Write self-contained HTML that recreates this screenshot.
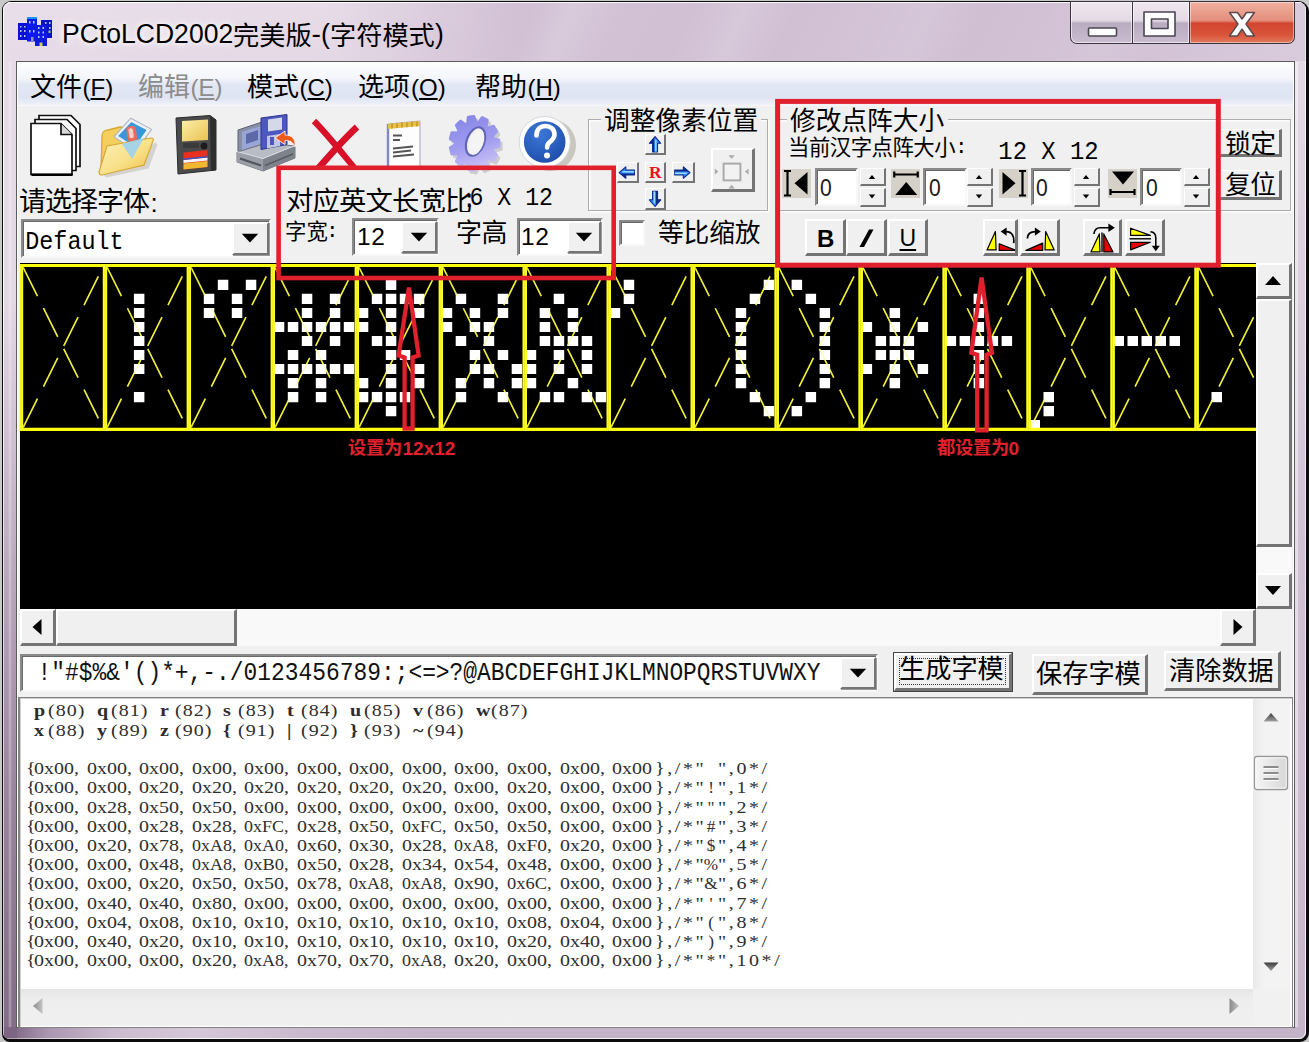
<!DOCTYPE html>
<html lang="zh"><head><meta charset="utf-8"><title>PCtoLCD2002</title>
<style>
*{margin:0;padding:0;box-sizing:border-box}
html,body{width:1309px;height:1042px;overflow:hidden}
body{background:#c9c9c9;font-family:"Liberation Sans",sans-serif;position:relative}
div,span.tx,svg.t,svg.i{position:absolute}
svg.t{overflow:visible}
svg.t text{font-family:"Liberation Sans","Noto Sans CJK SC",sans-serif}
span.tx{white-space:pre;line-height:1;color:#000}
.mono{font-family:"Liberation Mono",monospace}
.serif{font-family:"Liberation Serif",serif}
.serifmono{font-family:"Liberation Mono",monospace}
.btn{background:#f0f0f0;border:2px solid;border-color:#fff #747474 #747474 #fff;box-shadow:1px 1px 0 #9a9a9a}
.sunk{background:#fff;border:2px solid;border-color:#8a8a8a #f8f8f8 #f8f8f8 #8a8a8a;box-shadow:inset 1px 1px 0 #6a6a6a}
</style></head>
<body>
<div style="left:2px;top:1px;width:1307px;height:1041px;border-radius:9px 11px 9px 8px;background:#0c0c0c;"></div>
<div style="left:3px;top:2px;width:1303px;height:1037px;border-radius:8px 8px 7px 7px;overflow:hidden;background:linear-gradient(180deg,#e9dfea 0,#e6dbe7 60px,#e2d6e4 400px,#d9cadb 700px,#cdbcd1 900px,#c4b2c9 1037px);box-shadow:inset 0 0 0 1px rgba(255,255,255,.75);"><div style="left:0px;top:0px;width:1303px;height:59px;background:linear-gradient(115deg,rgba(255,255,255,0) 0,rgba(255,255,255,0) 40%,rgba(255,255,255,.16) 43%,rgba(255,255,255,.02) 47%,rgba(255,255,255,0) 52%,rgba(255,255,255,.14) 56%,rgba(255,255,255,0) 60%,rgba(255,255,255,.12) 70%,rgba(255,255,255,0) 74%,rgba(255,255,255,.1) 84%,rgba(255,255,255,0) 88%),linear-gradient(90deg,rgba(208,190,211,0) 0,rgba(208,190,211,.1) 330px,rgba(208,190,211,.95) 520px,rgba(208,190,211,1) 1050px,rgba(214,198,217,.8) 1303px);"></div><div style="left:0px;top:298px;width:13.5px;height:739px;background:linear-gradient(180deg,rgba(150,125,155,0) 0,rgba(150,125,155,.35) 200px,rgba(135,110,140,.75) 500px,rgba(125,100,130,.9) 739px);"></div><div style="left:5px;top:60px;width:4px;height:965px;background:linear-gradient(90deg,rgba(255,255,255,0),rgba(255,255,255,.35),rgba(255,255,255,0));"></div><div style="left:0px;top:1025px;width:1303px;height:12px;background:linear-gradient(90deg,rgba(125,100,130,.9) 0,rgba(125,100,130,.9) 12px,rgba(140,116,146,.45) 45px,rgba(255,255,255,.1) 110px,rgba(255,255,255,.28) 190px,rgba(255,255,255,.1) 300px,rgba(255,255,255,0) 430px);"></div><div style="left:1291px;top:60px;width:12px;height:977px;background:linear-gradient(180deg,rgba(200,180,205,.05) 0,rgba(195,172,200,.25) 250px,rgba(190,168,196,.4) 500px,rgba(200,180,205,.15) 977px);"></div><div style="left:1292px;top:60px;width:2.5px;height:965px;background:rgba(255,255,255,.45);"></div><div style="left:0px;top:0px;width:1303px;height:1.2px;background:rgba(255,255,255,.85);"></div><div style="left:0px;top:0px;width:1.2px;height:1037px;background:rgba(255,255,255,.6);"></div><div style="left:1301.8px;top:0px;width:1.2px;height:1037px;background:rgba(255,255,255,.5);"></div><div style="left:0px;top:1035.8px;width:1303px;height:1.2px;background:rgba(255,255,255,.45);"></div></div>
<div style="left:16px;top:61px;width:1279px;height:967px;background:#5c5c5c;"></div>
<div style="left:17px;top:62px;width:1277px;height:965px;background:#fdfdfd;"></div>
<div style="left:18px;top:63px;width:1275px;height:963px;background:#f0f0f0;"></div>
<svg class="i" style="left:17px;top:16px" width="37" height="33" viewBox="0 0 37 33">
<rect x="1" y="7" width="11" height="17" fill="#0a12d8"/><rect x="10" y="1.5" width="10" height="24" fill="#0a1aee"/>
<rect x="10" y="1" width="10" height="2" fill="#1e90ff"/>
<rect x="24" y="4" width="11" height="18" fill="#0a12c8"/><rect x="18" y="9" width="12" height="21" fill="#0d18e0"/>
<g fill="#b8c4ff"><rect x="3" y="10" width="1.5" height="1.5"/><rect x="7" y="10" width="1.5" height="1.5"/><rect x="3" y="14" width="1.5" height="2"/><rect x="7" y="14" width="1.5" height="2"/><rect x="3" y="19" width="1.5" height="2"/><rect x="7" y="19" width="1.5" height="2"/>
<rect x="12" y="5" width="1.5" height="2.5"/><rect x="16" y="5" width="1.5" height="2.5"/><rect x="12" y="14" width="1.5" height="2.5"/><rect x="16" y="14" width="1.5" height="2.5"/>
<rect x="21" y="11" width="1.5" height="2"/><rect x="25.5" y="11" width="1.5" height="2"/><rect x="21" y="15.5" width="1.5" height="2"/><rect x="25.5" y="15.5" width="1.5" height="2"/><rect x="21" y="20" width="1.5" height="2"/><rect x="25.5" y="20" width="1.5" height="2"/>
<rect x="28" y="6" width="1.5" height="2"/><rect x="32" y="6" width="1.5" height="2"/><rect x="32" y="11" width="1.5" height="2"/></g>
<rect x="31.5" y="14.500" width="2" height="2.500" fill="#9c6"/><rect x="14" y="21" width="2.500" height="4" fill="#99a"/><rect x="22.500" y="26.500" width="3" height="3.500" fill="#cc5"/>
</svg>
<span class="tx" style="left:61.5px;top:18.8px;font-size:28.4px;color:#000;transform:scaleX(.935);transform-origin:0 0;text-shadow:0 0 6px #fff,0 0 10px #fff;">PCtoLCD2002</span>
<svg class="t" role="img" aria-label="完美版" style="left:232.8px;top:21.5px;" width="80.6" height="31.4" viewBox="0 0 80.6 31.4" fill="#000"><text x="0" y="23.06" font-size="26.2">完美版</text></svg>
<span class="tx" style="left:311.5px;top:18.8px;font-size:28.4px;">-</span>
<span class="tx" style="left:321.3px;top:18.8px;font-size:28.4px;transform:scaleX(.935);transform-origin:0 0;">(</span>
<svg class="t" role="img" aria-label="字符模式" style="left:330px;top:21.5px;" width="106.8" height="31.4" viewBox="0 0 106.8 31.4" fill="#000"><text x="0" y="23.06" font-size="26.2">字符模式</text></svg>
<span class="tx" style="left:435px;top:18.8px;font-size:28.4px;transform:scaleX(.935);transform-origin:0 0;">)</span>
<div style="left:1070px;top:1px;width:225px;height:43px;border-radius:0 0 7px 7px;background:#3a3440;"></div>
<div style="left:1071px;top:2px;width:61px;height:41px;border-radius:0 0 0 6px;background:linear-gradient(180deg,#efe7ef 0,#e4dae6 45%,#b9abc0 52%,#cbbdd0 100%);box-shadow:inset 0 0 0 1px rgba(255,255,255,.6);"></div>
<div style="left:1133px;top:2px;width:56px;height:41px;background:linear-gradient(180deg,#efe7ef 0,#e4dae6 45%,#b9abc0 52%,#cbbdd0 100%);box-shadow:inset 0 0 0 1px rgba(255,255,255,.6);"></div>
<div style="left:1190px;top:2px;width:104px;height:41px;border-radius:0 0 6px 0;background:linear-gradient(180deg,#f0b1a0 0,#e58e7c 45%,#d2452e 52%,#d9543a 80%,#e07a5c 100%);box-shadow:inset 0 0 0 1px rgba(255,255,255,.45);"></div>
<svg class="i" style="left:1070px;top:0" width="226" height="46" viewBox="0 0 226 46">
<rect x="18.5" y="28" width="28" height="8" rx="1" fill="#fdfdfd" stroke="#4a4652" stroke-width="1.6"/>
<path d="M74 12h31v24h-31z M81.5 19v9.5h16.5v-9.5z" fill="#fdfdfd" fill-rule="evenodd" stroke="#4a4652" stroke-width="1.6" stroke-linejoin="round"/>
<path d="M159.5 12.5h8l4.5 6.5 4.500 -6.500h8l-8.500 11.500 8.500 12h-8l-4.500 -6.800 -4.500 6.800h-8l8.500 -12z" fill="#fdfdfd" stroke="#5a4a50" stroke-width="1.5" stroke-linejoin="round"/>
</svg>
<div style="left:18px;top:63px;width:1275px;height:43px;background:linear-gradient(180deg,#fdfdfe 0,#f4f6fb 35%,#e2e7f5 50%,#dfe4f3 80%,#e9edf7 92%,#f3f4f8 100%);"></div>
<div style="left:18px;top:105px;width:1275px;height:1px;background:#f7f7f7;"></div>
<svg class="t" role="img" aria-label="文件" style="left:29.5px;top:73.3px;" width="54.0" height="31.2" viewBox="0 0 54.0 31.2" fill="#000"><text x="0" y="22.88" font-size="26">文件</text></svg>
<span class="tx" style="left:82.5px;top:75.8px;font-size:24px;color:#000;">(<u>F</u>)</span>
<svg class="t" role="img" aria-label="编辑" style="left:137.5px;top:73.3px;" width="54.0" height="31.2" viewBox="0 0 54.0 31.2" fill="#8c8c8c"><text x="0" y="22.88" font-size="26">编辑</text></svg>
<span class="tx" style="left:190.5px;top:75.8px;font-size:24px;color:#8c8c8c;">(<u>E</u>)</span>
<svg class="t" role="img" aria-label="模式" style="left:246.5px;top:73.3px;" width="54.0" height="31.2" viewBox="0 0 54.0 31.2" fill="#000"><text x="0" y="22.88" font-size="26">模式</text></svg>
<span class="tx" style="left:299.5px;top:75.8px;font-size:24px;color:#000;">(<u>C</u>)</span>
<svg class="t" role="img" aria-label="选项" style="left:358.0px;top:73.3px;" width="54.0" height="31.2" viewBox="0 0 54.0 31.2" fill="#000"><text x="0" y="22.88" font-size="26">选项</text></svg>
<span class="tx" style="left:411.0px;top:75.8px;font-size:24px;color:#000;">(<u>O</u>)</span>
<svg class="t" role="img" aria-label="帮助" style="left:474.5px;top:73.3px;" width="54.0" height="31.2" viewBox="0 0 54.0 31.2" fill="#000"><text x="0" y="22.88" font-size="26">帮助</text></svg>
<span class="tx" style="left:527.5px;top:75.8px;font-size:24px;color:#000;">(<u>H</u>)</span>
<svg class="i" style="left:28px;top:112px" width="56" height="66" viewBox="0 0 56 66">
<g stroke="#111" stroke-width="1.700" stroke-linejoin="miter" fill="#fff">
<path d="M11 3.500h32l9 9v42h-41z"/><path d="M7 7.500h32l9 9v42h-41z"/>
<path d="M3 11.500h30l11 11v40h-41z"/><path d="M33 11.500v11h11" fill="#d8d8d8"/></g>
<path d="M3.500 62.800h41" stroke="#000" stroke-width="2.6"/>
</svg>
<svg class="i" style="left:96px;top:114px" width="62" height="64" viewBox="0 0 62 64">
<defs><linearGradient id="fg" x1="0" y1="0" x2="1" y2="1"><stop offset="0" stop-color="#fdf2ba"/><stop offset=".55" stop-color="#f8e088"/><stop offset="1" stop-color="#eebc40"/></linearGradient></defs>
<path d="M5 60l3 2 42-9 9-24-2-2z" fill="#b4b0a4" opacity=".45" transform="translate(2.500 1.500)"/>
<path d="M6 22c0-4 3-6 6-6l12-3 22 3c3 0 4 2 4 5l-2 30-40 8c-2 0-3-1-3-3z" fill="#f4cf5e" stroke="#d8a82e" stroke-width="1.3"/>
<g transform="rotate(-8 37 20)"><path d="M18 20l19-16 19 14-19 20z" fill="#eef2f8" stroke="#b0b4c0" stroke-width="1.1"/>
<path d="M22 20l15-12 14 10-14 15z" fill="#3c96dc"/>
<rect x="31" y="12" width="9.500" height="15" rx="3.500" fill="#ee6a58"/><rect x="33" y="14" width="4.500" height="10" rx="2" fill="#fbd0c8"/></g>
<path d="M3 58l8-26 44-8c2 0 3 1 2 3l-9 24-42 10c-2 0-3-1-3-3z" fill="url(#fg)" stroke="#d6aa3a" stroke-width="1.2"/>
<path d="M26 30l22-6-12 21z" fill="#9cd0f0" opacity=".9"/>
</svg>
<svg class="i" style="left:173px;top:113px" width="46" height="64" viewBox="0 0 46 64">
<defs><linearGradient id="yl" x1="0" y1="0" x2="1" y2="1"><stop offset="0" stop-color="#fdf0a8"/><stop offset="1" stop-color="#eac050"/></linearGradient></defs>
<path d="M3 5l34-2.500 6 4.500v50l-38 4z" fill="#4a4a4a" stroke="#2a2a2a" stroke-width="1"/>
<path d="M37 2.500l6 4.500v50l-5 .6z" fill="#2e2e2e"/>
<path d="M9 8l26-1.600v20.500l-26 1.600z" fill="url(#yl)"/>
<circle cx="31" cy="33" r="3.400" fill="#1c1c1c"/><rect x="10" y="30" width="16" height="5" fill="#3a3a3a"/>
<path d="M10.500 39.500l24-2.500v17l-24 2.500z" fill="#e83020"/>
<path d="M10.500 47l24-2.500v3l-24 2.500z" fill="#f4f4ff"/><path d="M10.500 45.500l24-2.500v1.600l-24 2.500z" fill="#4050c0"/>
<path d="M10.500 50.500l24-2.500v6l-24 2.500z" fill="#f0b830"/>
</svg>
<svg class="i" style="left:235px;top:112px" width="64" height="64" viewBox="0 0 64 64">
<path d="M3 18l24-8 8 3v26l-28 8-4-4z" fill="#8890a8" stroke="#5a5f74" stroke-width="1"/>
<path d="M7 20l19-6v18l-19 6z" fill="#9aa6d8"/><path d="M11 22l12-4v10l-12 4z" fill="#5c68a8"/>
<path d="M2 40l30-9 28 3v12l-32 13-26-9z" fill="#b8bcc4" stroke="#70747c" stroke-width="1"/>
<path d="M2 40l26 7 32-13" fill="none" stroke="#e8eaee" stroke-width="1.500"/>
<path d="M28 47v12l32-13v-12z" fill="#7e828a"/><path d="M2 40v10l26 9v-12z" fill="#9a9ea6"/><path d="M5 46.500l21 7" stroke="#50545c" stroke-width="2.200"/><path d="M30 53.500l28-11.500" stroke="#585c64" stroke-width="1.600"/>
<path d="M26 6l26-3.500v30l-26 5z" fill="#4c58c0" stroke="#2c3488" stroke-width="1"/>
<path d="M33 7.500l14-2v12l-14 2z" fill="#d4d8e8"/><path d="M32 24l13-2v12l-13 2.500z" fill="#c0c6e0"/><rect x="35" y="25" width="4" height="8" fill="#4c58c0"/>
<path d="M40 26l10-7v4c7 0 11 4 10 12-2-5-5-6.500-10-6.500v4z" fill="#f05a1c" stroke="#fff" stroke-width=".8"/>
</svg>
<svg class="i" style="left:310px;top:118px" width="54" height="50" viewBox="0 0 54 50">
<g stroke="#d81028" stroke-linecap="butt" fill="none"><path d="M4 3C17 16 32 35 47 53" stroke-width="6.200"/><path d="M47 9C33 22 19 38 6 53" stroke-width="6.600"/></g>
</svg>
<svg class="i" style="left:384px;top:115px" width="42" height="53" viewBox="0 0 42 53">
<path d="M4 9l32-3v50l-32 3z" fill="#fdfdfd" stroke="#aab" stroke-width="1"/>
<path d="M4 9v50" stroke="#8088c8" stroke-width="2.400"/><path d="M36 6v50" stroke="#ccd" stroke-width="2"/>
<path d="M4 9l32-3v5l-32 3z" fill="#e6c24c"/>
<g stroke="#c89a20" stroke-width="1.600"><path d="M8 8.500v5M13 8v5M18 7.600v5M23 7.200v5M28 6.800v5M33 6.400v5"/></g>
<g stroke="#555" stroke-width="1.800"><path d="M9 20.500h9M9 25h7M9 33.500l20-2M9 37.500l18-2M9 41.500l21-2M9 53h8M9 57h7"/></g>
</svg>
<svg class="i" style="left:444px;top:110px" width="62" height="70" viewBox="0 0 62 70">
<defs><linearGradient id="gg" x1="0" y1="0" x2=".3" y2="1"><stop offset="0" stop-color="#8484e4"/><stop offset=".6" stop-color="#a09cf0"/><stop offset="1" stop-color="#c4bcf4"/></linearGradient></defs>
<g transform="translate(2.500 3)"><path transform="translate(30.500 33.300) scale(.875 .955) translate(-30 -33)" d="M51.5 28.3L57.8 29.8L57.8 36.2L51.5 37.7L50.6 40.7L55.1 45.4L51.7 50.7L45.6 48.6L43.2 50.6L44.5 57.0L38.7 59.6L34.7 54.5L31.6 54.9L29.2 61.0L22.9 60.1L22.3 53.6L19.5 52.3L14.2 56.1L9.4 51.9L12.4 46.2L10.7 43.5L4.2 43.9L2.4 37.8L8.1 34.6L8.1 31.4L2.4 28.2L4.2 22.1L10.7 22.5L12.4 19.8L9.4 14.1L14.2 9.9L19.5 13.7L22.3 12.4L22.9 5.9L29.2 5.0L31.6 11.1L34.7 11.5L38.7 6.4L44.5 9.0L43.2 15.4L45.6 17.4L51.7 15.3L55.1 20.6L50.6 25.3Z" fill="#a8a8b4" opacity=".5" stroke="#a8a8b4" stroke-width="3" stroke-linejoin="round"/></g>
<path transform="translate(30.500 33.300) scale(.875 .955) translate(-30 -33)" d="M51.5 28.3L57.8 29.8L57.8 36.2L51.5 37.7L50.6 40.7L55.1 45.4L51.7 50.7L45.6 48.6L43.2 50.6L44.5 57.0L38.7 59.6L34.7 54.5L31.6 54.9L29.2 61.0L22.9 60.1L22.3 53.6L19.5 52.3L14.2 56.1L9.4 51.9L12.4 46.2L10.7 43.5L4.2 43.9L2.4 37.8L8.1 34.6L8.1 31.4L2.4 28.2L4.2 22.1L10.7 22.5L12.4 19.8L9.4 14.1L14.2 9.9L19.5 13.7L22.3 12.4L22.9 5.9L29.2 5.0L31.6 11.1L34.7 11.5L38.7 6.4L44.5 9.0L43.2 15.4L45.6 17.4L51.7 15.3L55.1 20.6L50.6 25.3Z" fill="url(#gg)" stroke="url(#gg)" stroke-width="3.500" stroke-linejoin="round"/>
<ellipse cx="31.500" cy="31.500" rx="8.800" ry="14.800" transform="rotate(20 31.500 31.500)" fill="#f0f0f0" stroke="#6464b8" stroke-width="2.200"/>
<ellipse cx="32.600" cy="32.500" rx="6.800" ry="12.800" transform="rotate(20 32.600 32.500)" fill="#f4f4f4"/>
</svg>
<svg class="i" style="left:514px;top:112px" width="68" height="64" viewBox="0 0 68 64">
<defs><radialGradient id="hb" cx=".4" cy=".3" r=".8"><stop offset="0" stop-color="#3c78d8"/><stop offset="1" stop-color="#1c4aa8"/></radialGradient></defs>
<ellipse cx="36" cy="33" rx="26" ry="26" fill="#b8b4a8" opacity=".7"/>
<circle cx="30.700" cy="30" r="25.500" fill="#fdfdfd" stroke="#d4d8e0" stroke-width="1"/>
<circle cx="30.700" cy="30" r="20.800" fill="url(#hb)"/>
<path d="M22.500 23.500c0-6 4-9.500 9-9.500s9 3.300 9 8.300c0 4.200-2.500 6-5 8-1.800 1.500-2.400 2.600-2.400 5.200" fill="none" stroke="#fff" stroke-width="4.600" stroke-linecap="round"/>
<circle cx="33" cy="43.500" r="3" fill="#fff"/>
</svg>
<svg class="t" role="img" aria-label="请选择字体" style="left:19.3px;top:187px;" width="132.0" height="32.400" viewBox="0 0 132.0 32.400" fill="#000"><text x="0" y="23.76" font-size="27" letter-spacing="-1">请选择字体</text></svg>
<span class="tx" style="left:150.5px;top:189.5px;font-size:26px;font-family:"Liberation Mono",monospace;font-weight:bold;">:</span>
<div class="sunk" style="left:20.5px;top:219px;width:250px;height:39px;"></div>
<div class="btn" style="left:232px;top:222px;width:36.500px;height:33px;"></div>
<svg class="i" style="left:241.2px;top:233.0px" width="18" height="10" viewBox="0 0 18 10"><path d="M.8 .8h16.400l-8.200 8.600z" fill="#000"/></svg>
<span class="tx mono" style="left:25.3px;top:229.8px;font-size:23.4px;transform:scaleY(1.12);transform-origin:0 0;">Default</span>
<div style="left:284px;top:184px;width:275px;height:28px;overflow:hidden;"><svg class="t" role="img" aria-label="对应英文长宽比" style="left:2px;top:2.5px;" width="187.5" height="32.900" viewBox="0 0 187.5 32.900" fill="#000"><text x="0" y="24.11" font-size="27.4" letter-spacing="-0.9">对应英文长宽比</text></svg><span class="tx mono" style="left:178px;top:4.5px;font-size:24px;">:</span><span class="tx mono" style="left:185.5px;top:1.8px;font-size:23.2px;transform:scaleY(1.14);transform-origin:0 0;">6 X 12</span></div>
<svg class="t" role="img" aria-label="字宽" style="left:284.5px;top:219.5px;" width="45.2" height="25.700" viewBox="0 0 45.2 25.700" fill="#000"><text x="0" y="18.83" font-size="21.4" letter-spacing="0.2">字宽</text></svg>
<span class="tx mono" style="left:326px;top:221px;font-size:21px;">:</span>
<div class="sunk" style="left:352px;top:218px;width:86.500px;height:38px;"></div>
<div class="btn" style="left:401px;top:221px;width:35.500px;height:32px;"></div>
<svg class="i" style="left:409.8px;top:231.5px" width="18" height="10" viewBox="0 0 18 10"><path d="M.8 .8h16.400l-8.200 8.600z" fill="#000"/></svg>
<span class="tx" style="left:357px;top:225px;font-size:24.5px;letter-spacing:.5px;">12</span>
<svg class="t" role="img" aria-label="字高" style="left:455.5px;top:218.5px;" width="53.0" height="31.200" viewBox="0 0 53.0 31.200" fill="#000"><text x="0" y="22.88" font-size="26" letter-spacing="-0.5">字高</text></svg>
<div class="sunk" style="left:517px;top:218px;width:85.500px;height:38px;"></div>
<div class="btn" style="left:566.5px;top:221px;width:34.0px;height:32px;"></div>
<svg class="i" style="left:574.5px;top:231.5px" width="18" height="10" viewBox="0 0 18 10"><path d="M.8 .8h16.400l-8.200 8.600z" fill="#000"/></svg>
<span class="tx" style="left:521px;top:225px;font-size:24.5px;letter-spacing:.5px;">12</span>
<div style="left:588px;top:118.5px;width:180px;height:92px;border:1.500px solid #adadad;box-shadow:inset 1.500px 1.500px 0 #fcfcfc,1.500px 1.500px 0 #fcfcfc;"></div>
<div style="left:601px;top:116.5px;width:160px;height:6px;background:#f0f0f0;"></div>
<svg class="t" role="img" aria-label="调整像素位置" style="left:603.5px;top:106.5px;" width="156.2" height="31.0" viewBox="0 0 156.2 31.0" fill="#000"><text x="0" y="22.7" font-size="25.8" letter-spacing="-0.1">调整像素位置</text></svg>
<div class="btn" style="left:645px;top:133.5px;width:21px;height:21.5px;border-width:1.500px 2.500px 2.500px 1.500px;box-shadow:none;"><svg class="i" style="left:0;top:0" width="21" height="21" viewBox="0 0 22 21"><g transform="rotate(0 9.500 9.500)"><path d="M9.500 1.200l6 7h-3.400v9h-5.200v-9h-3.400z" fill="#2c8cf8" stroke="#0c2a88" stroke-width="1.100" stroke-linejoin="round"/><path d="M9.500 1.200l-6 7h3.400v9h1.600v-14z" fill="#0c2a88"/><path d="M10.300 4.500v12.500" stroke="#9cd8ff" stroke-width="1.500"/></g></svg></div>
<div class="btn" style="left:616.5px;top:161.5px;width:22px;height:21.5px;border-width:1.500px 2.500px 2.500px 1.500px;box-shadow:none;"><svg class="i" style="left:0;top:0" width="21" height="21" viewBox="0 0 22 21"><g transform="rotate(-90 9.500 9.500)"><path d="M9.500 1.200l6 7h-3.400v9h-5.200v-9h-3.400z" fill="#2c8cf8" stroke="#0c2a88" stroke-width="1.100" stroke-linejoin="round"/><path d="M9.500 1.200l-6 7h3.400v9h1.600v-14z" fill="#0c2a88"/><path d="M10.300 4.500v12.500" stroke="#9cd8ff" stroke-width="1.500"/></g></svg></div>
<div class="btn" style="left:645px;top:161.5px;width:21px;height:21.5px;border-width:1.500px 2.500px 2.500px 1.500px;box-shadow:none;"><span class="tx serif" style="left:3px;top:1.500px;font-size:17.500px;font-weight:bold;color:#e8141c;">R</span></div>
<div class="btn" style="left:671.5px;top:161.5px;width:23px;height:21.5px;border-width:1.500px 2.500px 2.500px 1.500px;box-shadow:none;"><svg class="i" style="left:0;top:0" width="21" height="21" viewBox="0 0 22 21"><g transform="rotate(90 9.500 9.500)"><path d="M9.500 1.200l6 7h-3.400v9h-5.200v-9h-3.400z" fill="#2c8cf8" stroke="#0c2a88" stroke-width="1.100" stroke-linejoin="round"/><path d="M9.500 1.200l-6 7h3.400v9h1.600v-14z" fill="#0c2a88"/><path d="M10.300 4.500v12.500" stroke="#9cd8ff" stroke-width="1.500"/></g></svg></div>
<div class="btn" style="left:645px;top:187.5px;width:21px;height:22px;border-width:1.500px 2.500px 2.500px 1.500px;box-shadow:none;"><svg class="i" style="left:0;top:0" width="21" height="21" viewBox="0 0 22 21"><g transform="rotate(180 9.500 9.500)"><path d="M9.500 1.200l6 7h-3.400v9h-5.200v-9h-3.400z" fill="#2c8cf8" stroke="#0c2a88" stroke-width="1.100" stroke-linejoin="round"/><path d="M9.500 1.200l-6 7h3.400v9h1.600v-14z" fill="#0c2a88"/><path d="M10.300 4.500v12.500" stroke="#9cd8ff" stroke-width="1.500"/></g></svg></div>
<div class="btn" style="left:710.5px;top:148px;width:44px;height:44px;border-width:2px 3px 3px 2px;box-shadow:none;"><svg class="i" style="left:0;top:0;overflow:visible" width="40" height="40" viewBox="0 0 40 40"><rect x="10.600" y="13.600" width="16.800" height="16.800" fill="#f2f2f2" stroke="#a8a8a8" stroke-width="1.900"/><g fill="#ababab"><path d="M15.400 5.200h6.400l-3.200 3.600zM15.400 38.400h6.400l-3.200 -3.600zM1.800 18.400v6.400l3.600 -3.200zM35.600 18.400v6.400l-3.600 -3.200z"/></g></svg></div>
<div class="sunk" style="left:618.5px;top:220px;width:26.500px;height:26px;border-width:2.500px;"></div>
<svg class="t" role="img" aria-label="等比缩放" style="left:658px;top:218.5px;" width="104.4" height="31.0" viewBox="0 0 104.4 31.0" fill="#000"><text x="0" y="22.7" font-size="25.8" letter-spacing="-0.2">等比缩放</text></svg>
<div style="left:778px;top:118.5px;width:513px;height:92px;border:1.500px solid #adadad;box-shadow:inset 1.500px 1.500px 0 #fcfcfc,1.500px 1.500px 0 #fcfcfc;"></div>
<div style="left:787px;top:116.5px;width:161px;height:6px;background:#f0f0f0;"></div>
<svg class="t" role="img" aria-label="修改点阵大小" style="left:790px;top:106.5px;" width="156.2" height="31.0" viewBox="0 0 156.2 31.0" fill="#000"><text x="0" y="22.7" font-size="25.8" letter-spacing="-0.1">修改点阵大小</text></svg>
<svg class="t" role="img" aria-label="当前汉字点阵大小" style="left:787.5px;top:135.5px;" width="169.2" height="25.700" viewBox="0 0 169.2 25.700" fill="#000"><text x="0" y="18.83" font-size="21.4" letter-spacing="-0.5">当前汉字点阵大小</text></svg>
<span class="tx mono" style="left:955px;top:137px;font-size:21px;">:</span>
<span class="tx mono" style="left:998.3px;top:139.8px;font-size:23.9px;transform:scaleY(1.08);transform-origin:0 0;">12 X 12</span>
<div style="left:782px;top:169px;width:29px;height:28.5px;background:#d5d1c9;"><svg class="i" style="left:0;top:0" width="29" height="28.500" viewBox="0 0 29 28.500"><path d="M2 2h7M2 26.500h7M5.500 2v24.500" stroke="#000" stroke-width="2.200" fill="none"/><path d="M25.500 3v22.500l-13 -11.300z" fill="#000"/></svg></div>
<div class="sunk" style="left:814.5px;top:167.5px;width:43.500px;height:38.5px;"></div>
<span class="tx" style="left:820.0px;top:175.5px;font-size:24.5px;transform:scaleX(.86);transform-origin:0 0;color:#1c1c1c;">0</span>
<div class="btn" style="left:860px;top:167.5px;width:25.500px;height:18.5px;border-width:1.500px 2.500px 2.500px 1.500px;box-shadow:none;"><svg class="i" style="left:0;top:0" width="22" height="14" viewBox="0 0 22 14"><path d="M7.800 10h6.400l-3.200 -4z" fill="#000"/></svg></div>
<div class="btn" style="left:860px;top:188.3px;width:25.500px;height:18.5px;border-width:1.500px 2.500px 2.500px 1.500px;box-shadow:none;"><svg class="i" style="left:0;top:0" width="22" height="14" viewBox="0 0 22 14"><path d="M7.800 5.500h6.400l-3.200 4z" fill="#000"/></svg></div>
<div style="left:890.5px;top:169px;width:29.500px;height:28.5px;background:#d5d1c9;"><svg class="i" style="left:0;top:0" width="29.5" height="28.500" viewBox="0 0 29 28.500"><path d="M3 2.500v6M26.500 2.500v6M3 5.500h23.500" stroke="#000" stroke-width="2.200" fill="none"/><path d="M4 26h22l-11 -13z" fill="#000"/></svg></div>
<div class="sunk" style="left:923px;top:167.5px;width:43.500px;height:38.5px;"></div>
<span class="tx" style="left:928.5px;top:175.5px;font-size:24.5px;transform:scaleX(.86);transform-origin:0 0;color:#1c1c1c;">0</span>
<div class="btn" style="left:967px;top:167.5px;width:25.500px;height:18.5px;border-width:1.500px 2.500px 2.500px 1.500px;box-shadow:none;"><svg class="i" style="left:0;top:0" width="22" height="14" viewBox="0 0 22 14"><path d="M7.800 10h6.400l-3.200 -4z" fill="#000"/></svg></div>
<div class="btn" style="left:967px;top:188.3px;width:25.500px;height:18.5px;border-width:1.500px 2.500px 2.500px 1.500px;box-shadow:none;"><svg class="i" style="left:0;top:0" width="22" height="14" viewBox="0 0 22 14"><path d="M7.800 5.500h6.400l-3.200 4z" fill="#000"/></svg></div>
<div style="left:998.5px;top:169px;width:29px;height:28.5px;background:#d5d1c9;"><svg class="i" style="left:0;top:0" width="29" height="28.500" viewBox="0 0 29 28.500"><path d="M20 2h7M20 26.500h7M23.500 2v24.500" stroke="#000" stroke-width="2.200" fill="none"/><path d="M3.500 3v22.500l13 -11.300z" fill="#000"/></svg></div>
<div class="sunk" style="left:1030.5px;top:167.5px;width:41px;height:38.5px;"></div>
<span class="tx" style="left:1036.0px;top:175.5px;font-size:24.5px;transform:scaleX(.86);transform-origin:0 0;color:#1c1c1c;">0</span>
<div class="btn" style="left:1073.5px;top:167.5px;width:26px;height:18.5px;border-width:1.500px 2.500px 2.500px 1.500px;box-shadow:none;"><svg class="i" style="left:0;top:0" width="22" height="14" viewBox="0 0 22 14"><path d="M7.800 10h6.400l-3.200 -4z" fill="#000"/></svg></div>
<div class="btn" style="left:1073.5px;top:188.3px;width:26px;height:18.5px;border-width:1.500px 2.500px 2.500px 1.500px;box-shadow:none;"><svg class="i" style="left:0;top:0" width="22" height="14" viewBox="0 0 22 14"><path d="M7.800 5.500h6.400l-3.200 4z" fill="#000"/></svg></div>
<div style="left:1107.5px;top:169px;width:29px;height:28.5px;background:#d5d1c9;"><svg class="i" style="left:0;top:0" width="29" height="28.500" viewBox="0 0 29 28.500"><path d="M2.500 20v6M26.500 20v6M2.500 23h24" stroke="#000" stroke-width="2.200" fill="none"/><path d="M4 2.500h22l-11 13z" fill="#000"/></svg></div>
<div class="sunk" style="left:1140px;top:167.5px;width:42px;height:38.5px;"></div>
<span class="tx" style="left:1145.5px;top:175.5px;font-size:24.5px;transform:scaleX(.86);transform-origin:0 0;color:#1c1c1c;">0</span>
<div class="btn" style="left:1184px;top:167.5px;width:26px;height:18.5px;border-width:1.500px 2.500px 2.500px 1.500px;box-shadow:none;"><svg class="i" style="left:0;top:0" width="22" height="14" viewBox="0 0 22 14"><path d="M7.800 10h6.400l-3.200 -4z" fill="#000"/></svg></div>
<div class="btn" style="left:1184px;top:188.3px;width:26px;height:18.5px;border-width:1.500px 2.500px 2.500px 1.500px;box-shadow:none;"><svg class="i" style="left:0;top:0" width="22" height="14" viewBox="0 0 22 14"><path d="M7.800 5.500h6.400l-3.200 4z" fill="#000"/></svg></div>
<div class="btn" style="left:804.5px;top:218.5px;width:41px;height:37.5px;border-width:2px 3px 3px 2px;box-shadow:none;"><span class="tx" style="left:10.500px;top:6px;font-size:24px;font-weight:bold;">B</span></div>
<div class="btn" style="left:846px;top:218.5px;width:41px;height:37.5px;border-width:2px 3px 3px 2px;box-shadow:none;"><svg class="i" style="left:0;top:0" width="36" height="33" viewBox="0 0 36 33"><path d="M21 8.500h4.500l-9.500 17.500h-4.500z" fill="#000"/></svg></div>
<div class="btn" style="left:888px;top:218.5px;width:40px;height:37.5px;border-width:2px 3px 3px 2px;box-shadow:none;"><span class="tx" style="left:9.500px;top:6px;font-size:23px;text-decoration:underline;text-decoration-thickness:2px;text-underline-offset:3px;">U</span></div>
<div class="btn" style="left:982.5px;top:218.5px;width:35px;height:37.5px;border-width:2px 3px 3px 2px;box-shadow:none;"><svg class="i" style="left:0;top:0" width="30" height="32.500" viewBox="0 0 30 32.500"><path d="M2 28.900L10.400 10.600L11.100 28.900Z" fill="#ff0" stroke="#000" stroke-width="1.200" stroke-linejoin="round"/><path d="M14.200 22.800V29.400H31Z" fill="#e80000" stroke="#000" stroke-width="1.200" stroke-linejoin="round"/><path d="M28.700 22.100C29.500 15 27 10.600 21 10.600" fill="none" stroke="#000" stroke-width="1.700"/><path d="M15.700 10.600L21.600 6.500V14.700Z" fill="#000"/></svg></div>
<div class="btn" style="left:1019.5px;top:218.5px;width:40px;height:37.5px;border-width:2px 3px 3px 2px;box-shadow:none;"><svg class="i" style="left:0;top:0" width="35" height="32.500" viewBox="0 0 35 32.500"><path d="M32.200 28.900L23.700 10.600L23 28.900Z" fill="#ff0" stroke="#000" stroke-width="1.200" stroke-linejoin="round"/><path d="M20.700 22.100V29.400H3.900Z" fill="#e80000" stroke="#000" stroke-width="1.200" stroke-linejoin="round"/><path d="M5.400 17.500C5.400 13 8 10.600 13.500 10.600" fill="none" stroke="#000" stroke-width="1.700"/><path d="M18.800 10.600L12.900 6.500V14.700Z" fill="#000"/></svg></div>
<div class="btn" style="left:1082.5px;top:218.5px;width:39.500px;height:37.5px;border-width:2px 3px 3px 2px;box-shadow:none;"><svg class="i" style="left:0;top:0" width="34.5" height="32.500" viewBox="0 0 34.5 32.500"><path d="M5.900 30.900L14.300 12.900L15 30.900Z" fill="#ff0" stroke="#000" stroke-width="1.200" stroke-linejoin="round"/><path d="M18.800 12.900V30.900H28Z" fill="#e80000" stroke="#000" stroke-width="1.200" stroke-linejoin="round"/><path d="M17 11.400V31.200" stroke="#000" stroke-width="1.400"/><path d="M8.900 13C9.500 8.500 11.500 6.800 15 6.800H24" fill="none" stroke="#000" stroke-width="1.600"/><path d="M29.800 6.800L23.400 2.600V11Z" fill="#000"/></svg></div>
<div class="btn" style="left:1124.5px;top:218.5px;width:40px;height:37.5px;border-width:2px 3px 3px 2px;box-shadow:none;"><svg class="i" style="left:0;top:0" width="35" height="32.500" viewBox="0 0 35 32.500"><path d="M3.600 7.200V14.400H23.400Z" fill="#ff0" stroke="#000" stroke-width="1.200" stroke-linejoin="round"/><path d="M3.600 21.300H23.400L3.600 28.900Z" fill="#e80000" stroke="#000" stroke-width="1.200" stroke-linejoin="round"/><path d="M2.500 17.800H24" stroke="#000" stroke-width="1.400"/><path d="M23.400 10.800C27.500 11 28.800 13 28.800 17V26" fill="none" stroke="#000" stroke-width="1.600"/><path d="M28.800 30.200L24.800 24.800H32.800Z" fill="#000"/></svg></div>
<div class="btn" style="left:1220px;top:129px;width:62px;height:27.5px;border-width:1.500px 3px 3px 1.500px;box-shadow:none;"></div>
<svg class="t" role="img" aria-label="锁定" style="left:1224.5px;top:129.5px;" width="52.6" height="31.0" viewBox="0 0 52.6 31.0" fill="#000"><text x="0" y="22.7" font-size="25.8" letter-spacing="-0.5">锁定</text></svg>
<div class="btn" style="left:1220px;top:169.5px;width:62px;height:30.5px;border-width:1.500px 3px 3px 1.500px;box-shadow:none;"></div>
<svg class="t" role="img" aria-label="复位" style="left:1224.5px;top:170.5px;" width="52.6" height="31.0" viewBox="0 0 52.6 31.0" fill="#000"><text x="0" y="22.7" font-size="25.8" letter-spacing="-0.5">复位</text></svg>
<svg class="i" style="left:19.5px;top:262.5px" width="1236.5" height="346.5" viewBox="19.5 262.5 1236.5 346.5"><rect x="19.5" y="262.5" width="1236.5" height="346.5" fill="#000"/><path d="M22.7 267.0L102.3 426.8M22.7 426.8L102.3 267.0M106.7 267.0L186.2 426.8M106.7 426.8L186.2 267.0M190.6 267.0L270.2 426.8M190.6 426.8L270.2 267.0M274.6 267.0L354.2 426.8M274.6 426.8L354.2 267.0M358.6 267.0L438.2 426.8M358.6 426.8L438.2 267.0M442.6 267.0L522.1 426.8M442.6 426.8L522.1 267.0M526.5 267.0L606.1 426.8M526.5 426.8L606.1 267.0M610.5 267.0L690.1 426.8M610.5 426.8L690.1 267.0M694.5 267.0L774.0 426.8M694.5 426.8L774.0 267.0M778.4 267.0L858.0 426.8M778.4 426.8L858.0 267.0M862.4 267.0L942.0 426.8M862.4 426.8L942.0 267.0M946.4 267.0L1025.9 426.8M946.4 426.8L1025.9 267.0M1030.3 267.0L1109.9 426.8M1030.3 426.8L1109.9 267.0M1114.3 267.0L1193.9 426.8M1114.3 426.8L1193.9 267.0M1198.3 267.0L1277.8 426.8M1198.3 426.8L1277.8 267.0" stroke="#ecec38" stroke-width="1.600" stroke-dasharray="32 13.500" fill="none"/><path d="M133.4 293.3h10.500v10.200h-10.500zM133.4 307.4h10.500v10.200h-10.500zM133.4 321.4h10.500v10.200h-10.500zM133.4 335.4h10.500v10.200h-10.500zM133.4 349.4h10.500v10.200h-10.500zM133.4 363.4h10.500v10.200h-10.500zM133.4 391.5h10.500v10.200h-10.500zM217.3 279.3h10.500v10.200h-10.500zM245.3 279.3h10.500v10.200h-10.500zM203.3 293.3h10.500v10.200h-10.500zM231.3 293.3h10.500v10.200h-10.500zM203.3 307.4h10.500v10.200h-10.500zM231.3 307.4h10.500v10.200h-10.500zM301.3 293.3h10.500v10.200h-10.500zM329.3 293.3h10.500v10.200h-10.500zM301.3 307.4h10.500v10.200h-10.500zM329.3 307.4h10.500v10.200h-10.500zM273.3 321.4h10.500v10.200h-10.500zM287.3 321.4h10.500v10.200h-10.500zM301.3 321.4h10.500v10.200h-10.500zM315.3 321.4h10.500v10.200h-10.500zM329.3 321.4h10.500v10.200h-10.500zM343.3 321.4h10.500v10.200h-10.500zM301.3 335.4h10.500v10.200h-10.500zM329.3 335.4h10.500v10.200h-10.500zM287.3 349.4h10.500v10.200h-10.500zM315.3 349.4h10.500v10.200h-10.500zM273.3 363.4h10.500v10.200h-10.500zM287.3 363.4h10.500v10.200h-10.500zM301.3 363.4h10.500v10.200h-10.500zM315.3 363.4h10.500v10.200h-10.500zM329.3 363.4h10.500v10.200h-10.500zM343.3 363.4h10.500v10.200h-10.500zM287.3 377.5h10.500v10.200h-10.500zM315.3 377.5h10.500v10.200h-10.500zM287.3 391.5h10.500v10.200h-10.500zM315.3 391.5h10.500v10.200h-10.500zM385.3 279.3h10.500v10.200h-10.500zM371.3 293.3h10.500v10.200h-10.500zM385.3 293.3h10.500v10.200h-10.500zM399.3 293.3h10.500v10.200h-10.500zM413.3 293.3h10.500v10.200h-10.500zM357.3 307.4h10.500v10.200h-10.500zM385.3 307.4h10.500v10.200h-10.500zM413.3 307.4h10.500v10.200h-10.500zM357.3 321.4h10.500v10.200h-10.500zM385.3 321.4h10.500v10.200h-10.500zM371.3 335.4h10.500v10.200h-10.500zM385.3 335.4h10.500v10.200h-10.500zM385.3 349.4h10.500v10.200h-10.500zM399.3 349.4h10.500v10.200h-10.500zM385.3 363.4h10.500v10.200h-10.500zM413.3 363.4h10.500v10.200h-10.500zM357.3 377.5h10.500v10.200h-10.500zM385.3 377.5h10.500v10.200h-10.500zM413.3 377.5h10.500v10.200h-10.500zM357.3 391.5h10.500v10.200h-10.500zM371.3 391.5h10.500v10.200h-10.500zM385.3 391.5h10.500v10.200h-10.500zM399.3 391.5h10.500v10.200h-10.500zM385.3 405.5h10.500v10.200h-10.500zM455.2 293.3h10.500v10.200h-10.500zM497.2 293.3h10.500v10.200h-10.500zM441.2 307.4h10.500v10.200h-10.500zM469.2 307.4h10.500v10.200h-10.500zM497.2 307.4h10.500v10.200h-10.500zM441.2 321.4h10.500v10.200h-10.500zM469.2 321.4h10.500v10.200h-10.500zM483.2 321.4h10.500v10.200h-10.500zM455.2 335.4h10.500v10.200h-10.500zM483.2 335.4h10.500v10.200h-10.500zM469.2 349.4h10.500v10.200h-10.500zM497.2 349.4h10.500v10.200h-10.500zM469.2 363.4h10.500v10.200h-10.500zM483.2 363.4h10.500v10.200h-10.500zM511.2 363.4h10.500v10.200h-10.500zM455.2 377.5h10.500v10.200h-10.500zM483.2 377.5h10.500v10.200h-10.500zM511.2 377.5h10.500v10.200h-10.500zM455.2 391.5h10.500v10.200h-10.500zM497.2 391.5h10.500v10.200h-10.500zM553.2 293.3h10.500v10.200h-10.500zM539.2 307.4h10.500v10.200h-10.500zM567.2 307.4h10.500v10.200h-10.500zM539.2 321.4h10.500v10.200h-10.500zM567.2 321.4h10.500v10.200h-10.500zM539.2 335.4h10.500v10.200h-10.500zM553.2 335.4h10.500v10.200h-10.500zM567.2 335.4h10.500v10.200h-10.500zM581.2 335.4h10.500v10.200h-10.500zM525.2 349.4h10.500v10.200h-10.500zM553.2 349.4h10.500v10.200h-10.500zM581.2 349.4h10.500v10.200h-10.500zM525.2 363.4h10.500v10.200h-10.500zM553.2 363.4h10.500v10.200h-10.500zM581.2 363.4h10.500v10.200h-10.500zM525.2 377.5h10.500v10.200h-10.500zM567.2 377.5h10.500v10.200h-10.500zM539.2 391.5h10.500v10.200h-10.500zM553.2 391.5h10.500v10.200h-10.500zM581.2 391.5h10.500v10.200h-10.500zM595.2 391.5h10.500v10.200h-10.500zM623.2 279.3h10.500v10.200h-10.500zM623.2 293.3h10.500v10.200h-10.500zM609.2 307.4h10.500v10.200h-10.500zM763.2 279.3h10.500v10.200h-10.500zM749.2 293.3h10.500v10.200h-10.500zM735.2 307.4h10.500v10.200h-10.500zM735.2 321.4h10.500v10.200h-10.500zM735.2 335.4h10.500v10.200h-10.500zM735.2 349.4h10.500v10.200h-10.500zM735.2 363.4h10.500v10.200h-10.500zM735.2 377.5h10.500v10.200h-10.500zM749.2 391.5h10.500v10.200h-10.500zM763.2 405.5h10.500v10.200h-10.500zM791.1 279.3h10.500v10.200h-10.500zM805.1 293.3h10.500v10.200h-10.500zM819.1 307.4h10.500v10.200h-10.500zM819.1 321.4h10.500v10.200h-10.500zM819.1 335.4h10.500v10.200h-10.500zM819.1 349.4h10.500v10.200h-10.500zM819.1 363.4h10.500v10.200h-10.500zM819.1 377.5h10.500v10.200h-10.500zM805.1 391.5h10.500v10.200h-10.500zM791.1 405.5h10.500v10.200h-10.500zM889.1 307.4h10.500v10.200h-10.500zM861.1 321.4h10.500v10.200h-10.500zM889.1 321.4h10.500v10.200h-10.500zM917.1 321.4h10.500v10.200h-10.500zM875.1 335.4h10.500v10.200h-10.500zM889.1 335.4h10.500v10.200h-10.500zM903.1 335.4h10.500v10.200h-10.500zM875.1 349.4h10.500v10.200h-10.500zM889.1 349.4h10.500v10.200h-10.500zM903.1 349.4h10.500v10.200h-10.500zM861.1 363.4h10.500v10.200h-10.500zM889.1 363.4h10.500v10.200h-10.500zM917.1 363.4h10.500v10.200h-10.500zM889.1 377.5h10.500v10.200h-10.500zM973.1 293.3h10.500v10.200h-10.500zM973.1 307.4h10.500v10.200h-10.500zM973.1 321.4h10.500v10.200h-10.500zM945.1 335.4h10.500v10.200h-10.500zM959.1 335.4h10.500v10.200h-10.500zM973.1 335.4h10.500v10.200h-10.500zM987.1 335.4h10.500v10.200h-10.500zM1001.1 335.4h10.500v10.200h-10.500zM973.1 349.4h10.500v10.200h-10.500zM973.1 363.4h10.500v10.200h-10.500zM973.1 377.5h10.500v10.200h-10.500zM1043.0 391.5h10.500v10.200h-10.500zM1043.0 405.5h10.500v10.200h-10.500zM1029.0 419.5h10.500v10.200h-10.500zM1113.0 335.4h10.500v10.200h-10.500zM1127.0 335.4h10.500v10.200h-10.500zM1141.0 335.4h10.500v10.200h-10.500zM1155.0 335.4h10.500v10.200h-10.500zM1169.0 335.4h10.500v10.200h-10.500zM1211.0 391.5h10.500v10.200h-10.500z" fill="#fff"/><path d="M22.7 267.0L102.3 426.8M22.7 426.8L102.3 267.0M106.7 267.0L186.2 426.8M106.7 426.8L186.2 267.0M190.6 267.0L270.2 426.8M190.6 426.8L270.2 267.0M274.6 267.0L354.2 426.8M274.6 426.8L354.2 267.0M358.6 267.0L438.2 426.8M358.6 426.8L438.2 267.0M442.6 267.0L522.1 426.8M442.6 426.8L522.1 267.0M526.5 267.0L606.1 426.8M526.5 426.8L606.1 267.0M610.5 267.0L690.1 426.8M610.5 426.8L690.1 267.0M694.5 267.0L774.0 426.8M694.5 426.8L774.0 267.0M778.4 267.0L858.0 426.8M778.4 426.8L858.0 267.0M862.4 267.0L942.0 426.8M862.4 426.8L942.0 267.0M946.4 267.0L1025.9 426.8M946.4 426.8L1025.9 267.0M1030.3 267.0L1109.9 426.8M1030.3 426.8L1109.9 267.0M1114.3 267.0L1193.9 426.8M1114.3 426.8L1193.9 267.0M1198.3 267.0L1277.8 426.8M1198.3 426.8L1277.8 267.0" stroke="#f4f032" stroke-width="1.100" stroke-dasharray="32 13.500" fill="none" opacity=".45"/><path d="M19.5 265.0H1256M19.5 428.8H1256" stroke="#ffff10" stroke-width="3.200" fill="none"/><path d="M20.5 265.0V430.3M104.5 265.0V430.3M188.4 265.0V430.3M272.4 265.0V430.3M356.4 265.0V430.3M440.4 265.0V430.3M524.3 265.0V430.3M608.3 265.0V430.3M692.3 265.0V430.3M776.2 265.0V430.3M860.2 265.0V430.3M944.2 265.0V430.3M1028.1 265.0V430.3M1112.1 265.0V430.3M1196.1 265.0V430.3" stroke="#d4d414" stroke-width="4.200" fill="none"/><path d="M20.5 265.0V430.3M104.5 265.0V430.3M188.4 265.0V430.3M272.4 265.0V430.3M356.4 265.0V430.3M440.4 265.0V430.3M524.3 265.0V430.3M608.3 265.0V430.3M692.3 265.0V430.3M776.2 265.0V430.3M860.2 265.0V430.3M944.2 265.0V430.3M1028.1 265.0V430.3M1112.1 265.0V430.3M1196.1 265.0V430.3" stroke="#ffff20" stroke-width="1.900" fill="none" transform="translate(-1.2 0)"/><path d="M20.5 265.0V430.3M104.5 265.0V430.3M188.4 265.0V430.3M272.4 265.0V430.3M356.4 265.0V430.3M440.4 265.0V430.3M524.3 265.0V430.3M608.3 265.0V430.3M692.3 265.0V430.3M776.2 265.0V430.3M860.2 265.0V430.3M944.2 265.0V430.3M1028.1 265.0V430.3M1112.1 265.0V430.3M1196.1 265.0V430.3" stroke="#ffff20" stroke-width="1.900" fill="none" transform="translate(1.2 0)"/></svg>
<div style="left:1256px;top:262.5px;width:35.500px;height:346.5px;background:#f9f9f9;"></div>
<div class="btn" style="left:1256px;top:262.5px;width:35.500px;height:36px;border-width:2px 3px 3px 2px;box-shadow:none;"><svg class="i" style="left:4.2px;top:6.0px" width="22" height="19" viewBox="0 0 22 19"><path d="M3 14h16l-8 -9z" fill="#000"/></svg></div>
<div class="btn" style="left:1256px;top:299px;width:35.500px;height:248px;border-width:2px 3px 3px 2px;box-shadow:none;"></div>
<div class="btn" style="left:1256px;top:573px;width:35.500px;height:36px;border-width:2px 3px 3px 2px;box-shadow:none;"><svg class="i" style="left:4.2px;top:6.0px" width="22" height="19" viewBox="0 0 22 19"><path d="M3 5h16l-8 9z" fill="#000"/></svg></div>
<div style="left:19.5px;top:609px;width:1236.500px;height:36.5px;background:#f9f9f9;"></div>
<div class="btn" style="left:19.5px;top:609px;width:36px;height:36.5px;border-width:2px 3px 3px 2px;box-shadow:none;"><svg class="i" style="left:5.5px;top:5.8px" width="20" height="20" viewBox="0 0 20 20"><path d="M14.500 2v16l-9 -8z" fill="#000"/></svg></div>
<div class="btn" style="left:56px;top:609px;width:181px;height:36.5px;border-width:2px 3px 3px 2px;box-shadow:none;"></div>
<div class="btn" style="left:1219.5px;top:609px;width:36.500px;height:36.5px;border-width:2px 3px 3px 2px;box-shadow:none;"><svg class="i" style="left:5.8px;top:5.8px" width="20" height="20" viewBox="0 0 20 20"><path d="M6.500 2v16l9 -8z" fill="#000"/></svg></div>
<div style="left:1256px;top:609px;width:35.500px;height:36.5px;background:#f0f0f0;"></div>
<div class="sunk" style="left:19.5px;top:653.8px;width:858px;height:38.5px;"></div>
<div class="btn" style="left:840px;top:656.8px;width:35.500px;height:32.5px;"></div>
<svg class="i" style="left:848.8px;top:667.5px" width="18" height="10" viewBox="0 0 18 10"><path d="M.8 .8h16.400l-8.200 8.600z" fill="#000"/></svg>
<span class="tx serifmono" style="left:37.5px;top:661.3px;font-size:22.9px;transform:scaleY(1.12);transform-origin:0 0;color:#111;">!&quot;#$%&amp;'()*+,-./0123456789:;&lt;=&gt;?@ABCDEFGHIJKLMNOPQRSTUVWXY</span>
<div class="btn" style="left:893.5px;top:652.5px;width:118.500px;height:38.5px;border-width:2px 3px 3px 2px;box-shadow:none;outline:1.500px solid #444;"><div style="left:3px;top:3px;right:3px;bottom:3px;border:1.500px dotted #333;"></div></div>
<svg class="t" role="img" aria-label="生成字模" style="left:899.35px;top:655.0px;" width="106.8" height="31.400" viewBox="0 0 106.8 31.400" fill="#000"><text x="0" y="23.06" font-size="26.2">生成字模</text></svg>
<div class="btn" style="left:1031.5px;top:653.5px;width:116.500px;height:41px;border-width:2px 3px 3px 2px;box-shadow:none;"></div>
<svg class="t" role="img" aria-label="保存字模" style="left:1036.35px;top:659.75px;" width="106.8" height="31.400" viewBox="0 0 106.8 31.400" fill="#000"><text x="0" y="23.06" font-size="26.2">保存字模</text></svg>
<div class="btn" style="left:1163.5px;top:650.5px;width:117px;height:40px;border-width:2px 3px 3px 2px;box-shadow:none;"></div>
<svg class="t" role="img" aria-label="清除数据" style="left:1168.6px;top:656.75px;" width="106.8" height="31.400" viewBox="0 0 106.8 31.400" fill="#000"><text x="0" y="23.06" font-size="26.2">清除数据</text></svg>
<div style="left:18px;top:696.5px;width:1275px;height:331px;background:#828282;"></div>
<div style="left:19.5px;top:698px;width:1272px;height:328.5px;background:#fff;border-left:1px solid #d0d0d0;border-top:1px solid #d0d0d0;"></div>
<span class="tx serif" style="left:33.7px;top:702.4px;font-size:17.2px;transform:scaleX(1.163);transform-origin:0 0;color:#2e2e2e;font-weight:bold;color:#2c2c2c;">p</span>
<span class="tx serif" style="left:48.2px;top:702.4px;font-size:17.2px;transform:scaleX(1.163);transform-origin:0 0;color:#2e2e2e;letter-spacing:.9px;">(80)</span>
<span class="tx serif" style="left:96.9px;top:702.4px;font-size:17.2px;transform:scaleX(1.163);transform-origin:0 0;color:#2e2e2e;font-weight:bold;color:#2c2c2c;">q</span>
<span class="tx serif" style="left:111.4px;top:702.4px;font-size:17.2px;transform:scaleX(1.163);transform-origin:0 0;color:#2e2e2e;letter-spacing:.9px;">(81)</span>
<span class="tx serif" style="left:160.10000000000002px;top:702.4px;font-size:17.2px;transform:scaleX(1.163);transform-origin:0 0;color:#2e2e2e;font-weight:bold;color:#2c2c2c;">r</span>
<span class="tx serif" style="left:174.60000000000002px;top:702.4px;font-size:17.2px;transform:scaleX(1.163);transform-origin:0 0;color:#2e2e2e;letter-spacing:.9px;">(82)</span>
<span class="tx serif" style="left:223.3px;top:702.4px;font-size:17.2px;transform:scaleX(1.163);transform-origin:0 0;color:#2e2e2e;font-weight:bold;color:#2c2c2c;">s</span>
<span class="tx serif" style="left:237.8px;top:702.4px;font-size:17.2px;transform:scaleX(1.163);transform-origin:0 0;color:#2e2e2e;letter-spacing:.9px;">(83)</span>
<span class="tx serif" style="left:286.5px;top:702.4px;font-size:17.2px;transform:scaleX(1.163);transform-origin:0 0;color:#2e2e2e;font-weight:bold;color:#2c2c2c;">t</span>
<span class="tx serif" style="left:301.0px;top:702.4px;font-size:17.2px;transform:scaleX(1.163);transform-origin:0 0;color:#2e2e2e;letter-spacing:.9px;">(84)</span>
<span class="tx serif" style="left:349.7px;top:702.4px;font-size:17.2px;transform:scaleX(1.163);transform-origin:0 0;color:#2e2e2e;font-weight:bold;color:#2c2c2c;">u</span>
<span class="tx serif" style="left:364.2px;top:702.4px;font-size:17.2px;transform:scaleX(1.163);transform-origin:0 0;color:#2e2e2e;letter-spacing:.9px;">(85)</span>
<span class="tx serif" style="left:412.90000000000003px;top:702.4px;font-size:17.2px;transform:scaleX(1.163);transform-origin:0 0;color:#2e2e2e;font-weight:bold;color:#2c2c2c;">v</span>
<span class="tx serif" style="left:427.40000000000003px;top:702.4px;font-size:17.2px;transform:scaleX(1.163);transform-origin:0 0;color:#2e2e2e;letter-spacing:.9px;">(86)</span>
<span class="tx serif" style="left:476.1px;top:702.4px;font-size:17.2px;transform:scaleX(1.163);transform-origin:0 0;color:#2e2e2e;font-weight:bold;color:#2c2c2c;">w</span>
<span class="tx serif" style="left:490.6px;top:702.4px;font-size:17.2px;transform:scaleX(1.163);transform-origin:0 0;color:#2e2e2e;letter-spacing:.9px;">(87)</span>
<span class="tx serif" style="left:33.7px;top:721.62px;font-size:17.2px;transform:scaleX(1.163);transform-origin:0 0;color:#2e2e2e;font-weight:bold;color:#2c2c2c;">x</span>
<span class="tx serif" style="left:48.2px;top:721.62px;font-size:17.2px;transform:scaleX(1.163);transform-origin:0 0;color:#2e2e2e;letter-spacing:.9px;">(88)</span>
<span class="tx serif" style="left:96.9px;top:721.62px;font-size:17.2px;transform:scaleX(1.163);transform-origin:0 0;color:#2e2e2e;font-weight:bold;color:#2c2c2c;">y</span>
<span class="tx serif" style="left:111.4px;top:721.62px;font-size:17.2px;transform:scaleX(1.163);transform-origin:0 0;color:#2e2e2e;letter-spacing:.9px;">(89)</span>
<span class="tx serif" style="left:160.10000000000002px;top:721.62px;font-size:17.2px;transform:scaleX(1.163);transform-origin:0 0;color:#2e2e2e;font-weight:bold;color:#2c2c2c;">z</span>
<span class="tx serif" style="left:174.60000000000002px;top:721.62px;font-size:17.2px;transform:scaleX(1.163);transform-origin:0 0;color:#2e2e2e;letter-spacing:.9px;">(90)</span>
<span class="tx serif" style="left:223.3px;top:721.62px;font-size:17.2px;transform:scaleX(1.163);transform-origin:0 0;color:#2e2e2e;font-weight:bold;color:#2c2c2c;">{</span>
<span class="tx serif" style="left:237.8px;top:721.62px;font-size:17.2px;transform:scaleX(1.163);transform-origin:0 0;color:#2e2e2e;letter-spacing:.9px;">(91)</span>
<span class="tx serif" style="left:286.5px;top:721.62px;font-size:17.2px;transform:scaleX(1.163);transform-origin:0 0;color:#2e2e2e;font-weight:bold;color:#2c2c2c;">|</span>
<span class="tx serif" style="left:301.0px;top:721.62px;font-size:17.2px;transform:scaleX(1.163);transform-origin:0 0;color:#2e2e2e;letter-spacing:.9px;">(92)</span>
<span class="tx serif" style="left:349.7px;top:721.62px;font-size:17.2px;transform:scaleX(1.163);transform-origin:0 0;color:#2e2e2e;font-weight:bold;color:#2c2c2c;">}</span>
<span class="tx serif" style="left:364.2px;top:721.62px;font-size:17.2px;transform:scaleX(1.163);transform-origin:0 0;color:#2e2e2e;letter-spacing:.9px;">(93)</span>
<span class="tx serif" style="left:412.90000000000003px;top:721.62px;font-size:17.2px;transform:scaleX(1.163);transform-origin:0 0;color:#2e2e2e;font-weight:bold;color:#2c2c2c;">~</span>
<span class="tx serif" style="left:427.40000000000003px;top:721.62px;font-size:17.2px;transform:scaleX(1.163);transform-origin:0 0;color:#2e2e2e;letter-spacing:.9px;">(94)</span>
<span class="tx serif" style="left:26.3px;top:760.06px;font-size:17.2px;transform:scaleX(1.163);transform-origin:0 0;color:#2e2e2e;">{</span>
<span class="tx serif" style="left:34.3px;top:760.06px;font-size:17.2px;transform:scaleX(1.1628);transform-origin:0 0;color:#2e2e2e;">0x00,</span>
<span class="tx serif" style="left:86.82px;top:760.06px;font-size:17.2px;transform:scaleX(1.1628);transform-origin:0 0;color:#2e2e2e;">0x00,</span>
<span class="tx serif" style="left:139.34px;top:760.06px;font-size:17.2px;transform:scaleX(1.1628);transform-origin:0 0;color:#2e2e2e;">0x00,</span>
<span class="tx serif" style="left:191.86px;top:760.06px;font-size:17.2px;transform:scaleX(1.1628);transform-origin:0 0;color:#2e2e2e;">0x00,</span>
<span class="tx serif" style="left:244.38px;top:760.06px;font-size:17.2px;transform:scaleX(1.1628);transform-origin:0 0;color:#2e2e2e;">0x00,</span>
<span class="tx serif" style="left:296.90000000000003px;top:760.06px;font-size:17.2px;transform:scaleX(1.1628);transform-origin:0 0;color:#2e2e2e;">0x00,</span>
<span class="tx serif" style="left:349.42px;top:760.06px;font-size:17.2px;transform:scaleX(1.1628);transform-origin:0 0;color:#2e2e2e;">0x00,</span>
<span class="tx serif" style="left:401.94000000000005px;top:760.06px;font-size:17.2px;transform:scaleX(1.1628);transform-origin:0 0;color:#2e2e2e;">0x00,</span>
<span class="tx serif" style="left:454.46000000000004px;top:760.06px;font-size:17.2px;transform:scaleX(1.1628);transform-origin:0 0;color:#2e2e2e;">0x00,</span>
<span class="tx serif" style="left:506.98px;top:760.06px;font-size:17.2px;transform:scaleX(1.1628);transform-origin:0 0;color:#2e2e2e;">0x00,</span>
<span class="tx serif" style="left:559.5px;top:760.06px;font-size:17.2px;transform:scaleX(1.1628);transform-origin:0 0;color:#2e2e2e;">0x00,</span>
<span class="tx serif" style="left:612.02px;top:760.06px;font-size:17.2px;transform:scaleX(1.1628);transform-origin:0 0;color:#2e2e2e;">0x00</span>
<span class="tx serif" style="left:654.5px;top:760.06px;font-size:17.2px;transform:scaleX(1.163);transform-origin:0 0;color:#2e2e2e;letter-spacing:2.250px;">},/*"</span>
<span class="tx serif" style="left:701px;top:760.1px;width:20px;text-align:center;font-size:17.2px;color:#2e2e2e;"> </span>
<span class="tx serif" style="left:718.3px;top:760.06px;font-size:17.2px;transform:scaleX(1.163);transform-origin:0 0;color:#2e2e2e;letter-spacing:2.250px;">",0*/</span>
<span class="tx serif" style="left:26.3px;top:779.28px;font-size:17.2px;transform:scaleX(1.163);transform-origin:0 0;color:#2e2e2e;">{</span>
<span class="tx serif" style="left:34.3px;top:779.28px;font-size:17.2px;transform:scaleX(1.1628);transform-origin:0 0;color:#2e2e2e;">0x00,</span>
<span class="tx serif" style="left:86.82px;top:779.28px;font-size:17.2px;transform:scaleX(1.1628);transform-origin:0 0;color:#2e2e2e;">0x00,</span>
<span class="tx serif" style="left:139.34px;top:779.28px;font-size:17.2px;transform:scaleX(1.1628);transform-origin:0 0;color:#2e2e2e;">0x20,</span>
<span class="tx serif" style="left:191.86px;top:779.28px;font-size:17.2px;transform:scaleX(1.1628);transform-origin:0 0;color:#2e2e2e;">0x20,</span>
<span class="tx serif" style="left:244.38px;top:779.28px;font-size:17.2px;transform:scaleX(1.1628);transform-origin:0 0;color:#2e2e2e;">0x20,</span>
<span class="tx serif" style="left:296.90000000000003px;top:779.28px;font-size:17.2px;transform:scaleX(1.1628);transform-origin:0 0;color:#2e2e2e;">0x20,</span>
<span class="tx serif" style="left:349.42px;top:779.28px;font-size:17.2px;transform:scaleX(1.1628);transform-origin:0 0;color:#2e2e2e;">0x20,</span>
<span class="tx serif" style="left:401.94000000000005px;top:779.28px;font-size:17.2px;transform:scaleX(1.1628);transform-origin:0 0;color:#2e2e2e;">0x20,</span>
<span class="tx serif" style="left:454.46000000000004px;top:779.28px;font-size:17.2px;transform:scaleX(1.1628);transform-origin:0 0;color:#2e2e2e;">0x00,</span>
<span class="tx serif" style="left:506.98px;top:779.28px;font-size:17.2px;transform:scaleX(1.1628);transform-origin:0 0;color:#2e2e2e;">0x20,</span>
<span class="tx serif" style="left:559.5px;top:779.28px;font-size:17.2px;transform:scaleX(1.1628);transform-origin:0 0;color:#2e2e2e;">0x00,</span>
<span class="tx serif" style="left:612.02px;top:779.28px;font-size:17.2px;transform:scaleX(1.1628);transform-origin:0 0;color:#2e2e2e;">0x00</span>
<span class="tx serif" style="left:654.5px;top:779.28px;font-size:17.2px;transform:scaleX(1.163);transform-origin:0 0;color:#2e2e2e;letter-spacing:2.250px;">},/*"</span>
<span class="tx serif" style="left:701px;top:779.3px;width:20px;text-align:center;font-size:17.2px;color:#2e2e2e;">!</span>
<span class="tx serif" style="left:718.3px;top:779.28px;font-size:17.2px;transform:scaleX(1.163);transform-origin:0 0;color:#2e2e2e;letter-spacing:2.250px;">",1*/</span>
<span class="tx serif" style="left:26.3px;top:798.5px;font-size:17.2px;transform:scaleX(1.163);transform-origin:0 0;color:#2e2e2e;">{</span>
<span class="tx serif" style="left:34.3px;top:798.5px;font-size:17.2px;transform:scaleX(1.1628);transform-origin:0 0;color:#2e2e2e;">0x00,</span>
<span class="tx serif" style="left:86.82px;top:798.5px;font-size:17.2px;transform:scaleX(1.1628);transform-origin:0 0;color:#2e2e2e;">0x28,</span>
<span class="tx serif" style="left:139.34px;top:798.5px;font-size:17.2px;transform:scaleX(1.1628);transform-origin:0 0;color:#2e2e2e;">0x50,</span>
<span class="tx serif" style="left:191.86px;top:798.5px;font-size:17.2px;transform:scaleX(1.1628);transform-origin:0 0;color:#2e2e2e;">0x50,</span>
<span class="tx serif" style="left:244.38px;top:798.5px;font-size:17.2px;transform:scaleX(1.1628);transform-origin:0 0;color:#2e2e2e;">0x00,</span>
<span class="tx serif" style="left:296.90000000000003px;top:798.5px;font-size:17.2px;transform:scaleX(1.1628);transform-origin:0 0;color:#2e2e2e;">0x00,</span>
<span class="tx serif" style="left:349.42px;top:798.5px;font-size:17.2px;transform:scaleX(1.1628);transform-origin:0 0;color:#2e2e2e;">0x00,</span>
<span class="tx serif" style="left:401.94000000000005px;top:798.5px;font-size:17.2px;transform:scaleX(1.1628);transform-origin:0 0;color:#2e2e2e;">0x00,</span>
<span class="tx serif" style="left:454.46000000000004px;top:798.5px;font-size:17.2px;transform:scaleX(1.1628);transform-origin:0 0;color:#2e2e2e;">0x00,</span>
<span class="tx serif" style="left:506.98px;top:798.5px;font-size:17.2px;transform:scaleX(1.1628);transform-origin:0 0;color:#2e2e2e;">0x00,</span>
<span class="tx serif" style="left:559.5px;top:798.5px;font-size:17.2px;transform:scaleX(1.1628);transform-origin:0 0;color:#2e2e2e;">0x00,</span>
<span class="tx serif" style="left:612.02px;top:798.5px;font-size:17.2px;transform:scaleX(1.1628);transform-origin:0 0;color:#2e2e2e;">0x00</span>
<span class="tx serif" style="left:654.5px;top:798.5px;font-size:17.2px;transform:scaleX(1.163);transform-origin:0 0;color:#2e2e2e;letter-spacing:2.250px;">},/*"</span>
<span class="tx serif" style="left:701px;top:798.5px;width:20px;text-align:center;font-size:17.2px;color:#2e2e2e;">"</span>
<span class="tx serif" style="left:718.3px;top:798.5px;font-size:17.2px;transform:scaleX(1.163);transform-origin:0 0;color:#2e2e2e;letter-spacing:2.250px;">",2*/</span>
<span class="tx serif" style="left:26.3px;top:817.7199999999999px;font-size:17.2px;transform:scaleX(1.163);transform-origin:0 0;color:#2e2e2e;">{</span>
<span class="tx serif" style="left:34.3px;top:817.7199999999999px;font-size:17.2px;transform:scaleX(1.1628);transform-origin:0 0;color:#2e2e2e;">0x00,</span>
<span class="tx serif" style="left:86.82px;top:817.7199999999999px;font-size:17.2px;transform:scaleX(1.1628);transform-origin:0 0;color:#2e2e2e;">0x00,</span>
<span class="tx serif" style="left:139.34px;top:817.7199999999999px;font-size:17.2px;transform:scaleX(1.1628);transform-origin:0 0;color:#2e2e2e;">0x28,</span>
<span class="tx serif" style="left:191.86px;top:817.7199999999999px;font-size:17.2px;transform:scaleX(1.1628);transform-origin:0 0;color:#2e2e2e;">0x28,</span>
<span class="tx serif" style="left:244.38px;top:817.7199999999999px;font-size:17.2px;transform:scaleX(1.0461);transform-origin:0 0;color:#2e2e2e;">0xFC,</span>
<span class="tx serif" style="left:296.90000000000003px;top:817.7199999999999px;font-size:17.2px;transform:scaleX(1.1628);transform-origin:0 0;color:#2e2e2e;">0x28,</span>
<span class="tx serif" style="left:349.42px;top:817.7199999999999px;font-size:17.2px;transform:scaleX(1.1628);transform-origin:0 0;color:#2e2e2e;">0x50,</span>
<span class="tx serif" style="left:401.94000000000005px;top:817.7199999999999px;font-size:17.2px;transform:scaleX(1.0461);transform-origin:0 0;color:#2e2e2e;">0xFC,</span>
<span class="tx serif" style="left:454.46000000000004px;top:817.7199999999999px;font-size:17.2px;transform:scaleX(1.1628);transform-origin:0 0;color:#2e2e2e;">0x50,</span>
<span class="tx serif" style="left:506.98px;top:817.7199999999999px;font-size:17.2px;transform:scaleX(1.1628);transform-origin:0 0;color:#2e2e2e;">0x50,</span>
<span class="tx serif" style="left:559.5px;top:817.7199999999999px;font-size:17.2px;transform:scaleX(1.1628);transform-origin:0 0;color:#2e2e2e;">0x00,</span>
<span class="tx serif" style="left:612.02px;top:817.7199999999999px;font-size:17.2px;transform:scaleX(1.1628);transform-origin:0 0;color:#2e2e2e;">0x00</span>
<span class="tx serif" style="left:654.5px;top:817.7199999999999px;font-size:17.2px;transform:scaleX(1.163);transform-origin:0 0;color:#2e2e2e;letter-spacing:2.250px;">},/*"</span>
<span class="tx serif" style="left:701px;top:817.7px;width:20px;text-align:center;font-size:17.2px;color:#2e2e2e;">#</span>
<span class="tx serif" style="left:718.3px;top:817.7199999999999px;font-size:17.2px;transform:scaleX(1.163);transform-origin:0 0;color:#2e2e2e;letter-spacing:2.250px;">",3*/</span>
<span class="tx serif" style="left:26.3px;top:836.9399999999999px;font-size:17.2px;transform:scaleX(1.163);transform-origin:0 0;color:#2e2e2e;">{</span>
<span class="tx serif" style="left:34.3px;top:836.9399999999999px;font-size:17.2px;transform:scaleX(1.1628);transform-origin:0 0;color:#2e2e2e;">0x00,</span>
<span class="tx serif" style="left:86.82px;top:836.9399999999999px;font-size:17.2px;transform:scaleX(1.1628);transform-origin:0 0;color:#2e2e2e;">0x20,</span>
<span class="tx serif" style="left:139.34px;top:836.9399999999999px;font-size:17.2px;transform:scaleX(1.1628);transform-origin:0 0;color:#2e2e2e;">0x78,</span>
<span class="tx serif" style="left:191.86px;top:836.9399999999999px;font-size:17.2px;transform:scaleX(1.0465);transform-origin:0 0;color:#2e2e2e;">0xA8,</span>
<span class="tx serif" style="left:244.38px;top:836.9399999999999px;font-size:17.2px;transform:scaleX(1.0465);transform-origin:0 0;color:#2e2e2e;">0xA0,</span>
<span class="tx serif" style="left:296.90000000000003px;top:836.9399999999999px;font-size:17.2px;transform:scaleX(1.1628);transform-origin:0 0;color:#2e2e2e;">0x60,</span>
<span class="tx serif" style="left:349.42px;top:836.9399999999999px;font-size:17.2px;transform:scaleX(1.1628);transform-origin:0 0;color:#2e2e2e;">0x30,</span>
<span class="tx serif" style="left:401.94000000000005px;top:836.9399999999999px;font-size:17.2px;transform:scaleX(1.1628);transform-origin:0 0;color:#2e2e2e;">0x28,</span>
<span class="tx serif" style="left:454.46000000000004px;top:836.9399999999999px;font-size:17.2px;transform:scaleX(1.0465);transform-origin:0 0;color:#2e2e2e;">0xA8,</span>
<span class="tx serif" style="left:506.98px;top:836.9399999999999px;font-size:17.2px;transform:scaleX(1.1310);transform-origin:0 0;color:#2e2e2e;">0xF0,</span>
<span class="tx serif" style="left:559.5px;top:836.9399999999999px;font-size:17.2px;transform:scaleX(1.1628);transform-origin:0 0;color:#2e2e2e;">0x20,</span>
<span class="tx serif" style="left:612.02px;top:836.9399999999999px;font-size:17.2px;transform:scaleX(1.1628);transform-origin:0 0;color:#2e2e2e;">0x00</span>
<span class="tx serif" style="left:654.5px;top:836.9399999999999px;font-size:17.2px;transform:scaleX(1.163);transform-origin:0 0;color:#2e2e2e;letter-spacing:2.250px;">},/*"</span>
<span class="tx serif" style="left:701px;top:836.9px;width:20px;text-align:center;font-size:17.2px;color:#2e2e2e;">$</span>
<span class="tx serif" style="left:718.3px;top:836.9399999999999px;font-size:17.2px;transform:scaleX(1.163);transform-origin:0 0;color:#2e2e2e;letter-spacing:2.250px;">",4*/</span>
<span class="tx serif" style="left:26.3px;top:856.16px;font-size:17.2px;transform:scaleX(1.163);transform-origin:0 0;color:#2e2e2e;">{</span>
<span class="tx serif" style="left:34.3px;top:856.16px;font-size:17.2px;transform:scaleX(1.1628);transform-origin:0 0;color:#2e2e2e;">0x00,</span>
<span class="tx serif" style="left:86.82px;top:856.16px;font-size:17.2px;transform:scaleX(1.1628);transform-origin:0 0;color:#2e2e2e;">0x00,</span>
<span class="tx serif" style="left:139.34px;top:856.16px;font-size:17.2px;transform:scaleX(1.1628);transform-origin:0 0;color:#2e2e2e;">0x48,</span>
<span class="tx serif" style="left:191.86px;top:856.16px;font-size:17.2px;transform:scaleX(1.0465);transform-origin:0 0;color:#2e2e2e;">0xA8,</span>
<span class="tx serif" style="left:244.38px;top:856.16px;font-size:17.2px;transform:scaleX(1.0732);transform-origin:0 0;color:#2e2e2e;">0xB0,</span>
<span class="tx serif" style="left:296.90000000000003px;top:856.16px;font-size:17.2px;transform:scaleX(1.1628);transform-origin:0 0;color:#2e2e2e;">0x50,</span>
<span class="tx serif" style="left:349.42px;top:856.16px;font-size:17.2px;transform:scaleX(1.1628);transform-origin:0 0;color:#2e2e2e;">0x28,</span>
<span class="tx serif" style="left:401.94000000000005px;top:856.16px;font-size:17.2px;transform:scaleX(1.1628);transform-origin:0 0;color:#2e2e2e;">0x34,</span>
<span class="tx serif" style="left:454.46000000000004px;top:856.16px;font-size:17.2px;transform:scaleX(1.1628);transform-origin:0 0;color:#2e2e2e;">0x54,</span>
<span class="tx serif" style="left:506.98px;top:856.16px;font-size:17.2px;transform:scaleX(1.1628);transform-origin:0 0;color:#2e2e2e;">0x48,</span>
<span class="tx serif" style="left:559.5px;top:856.16px;font-size:17.2px;transform:scaleX(1.1628);transform-origin:0 0;color:#2e2e2e;">0x00,</span>
<span class="tx serif" style="left:612.02px;top:856.16px;font-size:17.2px;transform:scaleX(1.1628);transform-origin:0 0;color:#2e2e2e;">0x00</span>
<span class="tx serif" style="left:654.5px;top:856.16px;font-size:17.2px;transform:scaleX(1.163);transform-origin:0 0;color:#2e2e2e;letter-spacing:2.250px;">},/*"</span>
<span class="tx serif" style="left:701px;top:856.2px;width:20px;text-align:center;font-size:17.2px;color:#2e2e2e;">%</span>
<span class="tx serif" style="left:718.3px;top:856.16px;font-size:17.2px;transform:scaleX(1.163);transform-origin:0 0;color:#2e2e2e;letter-spacing:2.250px;">",5*/</span>
<span class="tx serif" style="left:26.3px;top:875.38px;font-size:17.2px;transform:scaleX(1.163);transform-origin:0 0;color:#2e2e2e;">{</span>
<span class="tx serif" style="left:34.3px;top:875.38px;font-size:17.2px;transform:scaleX(1.1628);transform-origin:0 0;color:#2e2e2e;">0x00,</span>
<span class="tx serif" style="left:86.82px;top:875.38px;font-size:17.2px;transform:scaleX(1.1628);transform-origin:0 0;color:#2e2e2e;">0x00,</span>
<span class="tx serif" style="left:139.34px;top:875.38px;font-size:17.2px;transform:scaleX(1.1628);transform-origin:0 0;color:#2e2e2e;">0x20,</span>
<span class="tx serif" style="left:191.86px;top:875.38px;font-size:17.2px;transform:scaleX(1.1628);transform-origin:0 0;color:#2e2e2e;">0x50,</span>
<span class="tx serif" style="left:244.38px;top:875.38px;font-size:17.2px;transform:scaleX(1.1628);transform-origin:0 0;color:#2e2e2e;">0x50,</span>
<span class="tx serif" style="left:296.90000000000003px;top:875.38px;font-size:17.2px;transform:scaleX(1.1628);transform-origin:0 0;color:#2e2e2e;">0x78,</span>
<span class="tx serif" style="left:349.42px;top:875.38px;font-size:17.2px;transform:scaleX(1.0465);transform-origin:0 0;color:#2e2e2e;">0xA8,</span>
<span class="tx serif" style="left:401.94000000000005px;top:875.38px;font-size:17.2px;transform:scaleX(1.0465);transform-origin:0 0;color:#2e2e2e;">0xA8,</span>
<span class="tx serif" style="left:454.46000000000004px;top:875.38px;font-size:17.2px;transform:scaleX(1.1628);transform-origin:0 0;color:#2e2e2e;">0x90,</span>
<span class="tx serif" style="left:506.98px;top:875.38px;font-size:17.2px;transform:scaleX(1.0732);transform-origin:0 0;color:#2e2e2e;">0x6C,</span>
<span class="tx serif" style="left:559.5px;top:875.38px;font-size:17.2px;transform:scaleX(1.1628);transform-origin:0 0;color:#2e2e2e;">0x00,</span>
<span class="tx serif" style="left:612.02px;top:875.38px;font-size:17.2px;transform:scaleX(1.1628);transform-origin:0 0;color:#2e2e2e;">0x00</span>
<span class="tx serif" style="left:654.5px;top:875.38px;font-size:17.2px;transform:scaleX(1.163);transform-origin:0 0;color:#2e2e2e;letter-spacing:2.250px;">},/*"</span>
<span class="tx serif" style="left:701px;top:875.4px;width:20px;text-align:center;font-size:17.2px;color:#2e2e2e;">&amp;</span>
<span class="tx serif" style="left:718.3px;top:875.38px;font-size:17.2px;transform:scaleX(1.163);transform-origin:0 0;color:#2e2e2e;letter-spacing:2.250px;">",6*/</span>
<span class="tx serif" style="left:26.3px;top:894.6px;font-size:17.2px;transform:scaleX(1.163);transform-origin:0 0;color:#2e2e2e;">{</span>
<span class="tx serif" style="left:34.3px;top:894.6px;font-size:17.2px;transform:scaleX(1.1628);transform-origin:0 0;color:#2e2e2e;">0x00,</span>
<span class="tx serif" style="left:86.82px;top:894.6px;font-size:17.2px;transform:scaleX(1.1628);transform-origin:0 0;color:#2e2e2e;">0x40,</span>
<span class="tx serif" style="left:139.34px;top:894.6px;font-size:17.2px;transform:scaleX(1.1628);transform-origin:0 0;color:#2e2e2e;">0x40,</span>
<span class="tx serif" style="left:191.86px;top:894.6px;font-size:17.2px;transform:scaleX(1.1628);transform-origin:0 0;color:#2e2e2e;">0x80,</span>
<span class="tx serif" style="left:244.38px;top:894.6px;font-size:17.2px;transform:scaleX(1.1628);transform-origin:0 0;color:#2e2e2e;">0x00,</span>
<span class="tx serif" style="left:296.90000000000003px;top:894.6px;font-size:17.2px;transform:scaleX(1.1628);transform-origin:0 0;color:#2e2e2e;">0x00,</span>
<span class="tx serif" style="left:349.42px;top:894.6px;font-size:17.2px;transform:scaleX(1.1628);transform-origin:0 0;color:#2e2e2e;">0x00,</span>
<span class="tx serif" style="left:401.94000000000005px;top:894.6px;font-size:17.2px;transform:scaleX(1.1628);transform-origin:0 0;color:#2e2e2e;">0x00,</span>
<span class="tx serif" style="left:454.46000000000004px;top:894.6px;font-size:17.2px;transform:scaleX(1.1628);transform-origin:0 0;color:#2e2e2e;">0x00,</span>
<span class="tx serif" style="left:506.98px;top:894.6px;font-size:17.2px;transform:scaleX(1.1628);transform-origin:0 0;color:#2e2e2e;">0x00,</span>
<span class="tx serif" style="left:559.5px;top:894.6px;font-size:17.2px;transform:scaleX(1.1628);transform-origin:0 0;color:#2e2e2e;">0x00,</span>
<span class="tx serif" style="left:612.02px;top:894.6px;font-size:17.2px;transform:scaleX(1.1628);transform-origin:0 0;color:#2e2e2e;">0x00</span>
<span class="tx serif" style="left:654.5px;top:894.6px;font-size:17.2px;transform:scaleX(1.163);transform-origin:0 0;color:#2e2e2e;letter-spacing:2.250px;">},/*"</span>
<span class="tx serif" style="left:701px;top:894.6px;width:20px;text-align:center;font-size:17.2px;color:#2e2e2e;">'</span>
<span class="tx serif" style="left:718.3px;top:894.6px;font-size:17.2px;transform:scaleX(1.163);transform-origin:0 0;color:#2e2e2e;letter-spacing:2.250px;">",7*/</span>
<span class="tx serif" style="left:26.3px;top:913.8199999999999px;font-size:17.2px;transform:scaleX(1.163);transform-origin:0 0;color:#2e2e2e;">{</span>
<span class="tx serif" style="left:34.3px;top:913.8199999999999px;font-size:17.2px;transform:scaleX(1.1628);transform-origin:0 0;color:#2e2e2e;">0x00,</span>
<span class="tx serif" style="left:86.82px;top:913.8199999999999px;font-size:17.2px;transform:scaleX(1.1628);transform-origin:0 0;color:#2e2e2e;">0x04,</span>
<span class="tx serif" style="left:139.34px;top:913.8199999999999px;font-size:17.2px;transform:scaleX(1.1628);transform-origin:0 0;color:#2e2e2e;">0x08,</span>
<span class="tx serif" style="left:191.86px;top:913.8199999999999px;font-size:17.2px;transform:scaleX(1.1628);transform-origin:0 0;color:#2e2e2e;">0x10,</span>
<span class="tx serif" style="left:244.38px;top:913.8199999999999px;font-size:17.2px;transform:scaleX(1.1628);transform-origin:0 0;color:#2e2e2e;">0x10,</span>
<span class="tx serif" style="left:296.90000000000003px;top:913.8199999999999px;font-size:17.2px;transform:scaleX(1.1628);transform-origin:0 0;color:#2e2e2e;">0x10,</span>
<span class="tx serif" style="left:349.42px;top:913.8199999999999px;font-size:17.2px;transform:scaleX(1.1628);transform-origin:0 0;color:#2e2e2e;">0x10,</span>
<span class="tx serif" style="left:401.94000000000005px;top:913.8199999999999px;font-size:17.2px;transform:scaleX(1.1628);transform-origin:0 0;color:#2e2e2e;">0x10,</span>
<span class="tx serif" style="left:454.46000000000004px;top:913.8199999999999px;font-size:17.2px;transform:scaleX(1.1628);transform-origin:0 0;color:#2e2e2e;">0x10,</span>
<span class="tx serif" style="left:506.98px;top:913.8199999999999px;font-size:17.2px;transform:scaleX(1.1628);transform-origin:0 0;color:#2e2e2e;">0x08,</span>
<span class="tx serif" style="left:559.5px;top:913.8199999999999px;font-size:17.2px;transform:scaleX(1.1628);transform-origin:0 0;color:#2e2e2e;">0x04,</span>
<span class="tx serif" style="left:612.02px;top:913.8199999999999px;font-size:17.2px;transform:scaleX(1.1628);transform-origin:0 0;color:#2e2e2e;">0x00</span>
<span class="tx serif" style="left:654.5px;top:913.8199999999999px;font-size:17.2px;transform:scaleX(1.163);transform-origin:0 0;color:#2e2e2e;letter-spacing:2.250px;">},/*"</span>
<span class="tx serif" style="left:701px;top:913.8px;width:20px;text-align:center;font-size:17.2px;color:#2e2e2e;">(</span>
<span class="tx serif" style="left:718.3px;top:913.8199999999999px;font-size:17.2px;transform:scaleX(1.163);transform-origin:0 0;color:#2e2e2e;letter-spacing:2.250px;">",8*/</span>
<span class="tx serif" style="left:26.3px;top:933.04px;font-size:17.2px;transform:scaleX(1.163);transform-origin:0 0;color:#2e2e2e;">{</span>
<span class="tx serif" style="left:34.3px;top:933.04px;font-size:17.2px;transform:scaleX(1.1628);transform-origin:0 0;color:#2e2e2e;">0x00,</span>
<span class="tx serif" style="left:86.82px;top:933.04px;font-size:17.2px;transform:scaleX(1.1628);transform-origin:0 0;color:#2e2e2e;">0x40,</span>
<span class="tx serif" style="left:139.34px;top:933.04px;font-size:17.2px;transform:scaleX(1.1628);transform-origin:0 0;color:#2e2e2e;">0x20,</span>
<span class="tx serif" style="left:191.86px;top:933.04px;font-size:17.2px;transform:scaleX(1.1628);transform-origin:0 0;color:#2e2e2e;">0x10,</span>
<span class="tx serif" style="left:244.38px;top:933.04px;font-size:17.2px;transform:scaleX(1.1628);transform-origin:0 0;color:#2e2e2e;">0x10,</span>
<span class="tx serif" style="left:296.90000000000003px;top:933.04px;font-size:17.2px;transform:scaleX(1.1628);transform-origin:0 0;color:#2e2e2e;">0x10,</span>
<span class="tx serif" style="left:349.42px;top:933.04px;font-size:17.2px;transform:scaleX(1.1628);transform-origin:0 0;color:#2e2e2e;">0x10,</span>
<span class="tx serif" style="left:401.94000000000005px;top:933.04px;font-size:17.2px;transform:scaleX(1.1628);transform-origin:0 0;color:#2e2e2e;">0x10,</span>
<span class="tx serif" style="left:454.46000000000004px;top:933.04px;font-size:17.2px;transform:scaleX(1.1628);transform-origin:0 0;color:#2e2e2e;">0x10,</span>
<span class="tx serif" style="left:506.98px;top:933.04px;font-size:17.2px;transform:scaleX(1.1628);transform-origin:0 0;color:#2e2e2e;">0x20,</span>
<span class="tx serif" style="left:559.5px;top:933.04px;font-size:17.2px;transform:scaleX(1.1628);transform-origin:0 0;color:#2e2e2e;">0x40,</span>
<span class="tx serif" style="left:612.02px;top:933.04px;font-size:17.2px;transform:scaleX(1.1628);transform-origin:0 0;color:#2e2e2e;">0x00</span>
<span class="tx serif" style="left:654.5px;top:933.04px;font-size:17.2px;transform:scaleX(1.163);transform-origin:0 0;color:#2e2e2e;letter-spacing:2.250px;">},/*"</span>
<span class="tx serif" style="left:701px;top:933.0px;width:20px;text-align:center;font-size:17.2px;color:#2e2e2e;">)</span>
<span class="tx serif" style="left:718.3px;top:933.04px;font-size:17.2px;transform:scaleX(1.163);transform-origin:0 0;color:#2e2e2e;letter-spacing:2.250px;">",9*/</span>
<span class="tx serif" style="left:26.3px;top:952.26px;font-size:17.2px;transform:scaleX(1.163);transform-origin:0 0;color:#2e2e2e;">{</span>
<span class="tx serif" style="left:34.3px;top:952.26px;font-size:17.2px;transform:scaleX(1.1628);transform-origin:0 0;color:#2e2e2e;">0x00,</span>
<span class="tx serif" style="left:86.82px;top:952.26px;font-size:17.2px;transform:scaleX(1.1628);transform-origin:0 0;color:#2e2e2e;">0x00,</span>
<span class="tx serif" style="left:139.34px;top:952.26px;font-size:17.2px;transform:scaleX(1.1628);transform-origin:0 0;color:#2e2e2e;">0x00,</span>
<span class="tx serif" style="left:191.86px;top:952.26px;font-size:17.2px;transform:scaleX(1.1628);transform-origin:0 0;color:#2e2e2e;">0x20,</span>
<span class="tx serif" style="left:244.38px;top:952.26px;font-size:17.2px;transform:scaleX(1.0465);transform-origin:0 0;color:#2e2e2e;">0xA8,</span>
<span class="tx serif" style="left:296.90000000000003px;top:952.26px;font-size:17.2px;transform:scaleX(1.1628);transform-origin:0 0;color:#2e2e2e;">0x70,</span>
<span class="tx serif" style="left:349.42px;top:952.26px;font-size:17.2px;transform:scaleX(1.1628);transform-origin:0 0;color:#2e2e2e;">0x70,</span>
<span class="tx serif" style="left:401.94000000000005px;top:952.26px;font-size:17.2px;transform:scaleX(1.0465);transform-origin:0 0;color:#2e2e2e;">0xA8,</span>
<span class="tx serif" style="left:454.46000000000004px;top:952.26px;font-size:17.2px;transform:scaleX(1.1628);transform-origin:0 0;color:#2e2e2e;">0x20,</span>
<span class="tx serif" style="left:506.98px;top:952.26px;font-size:17.2px;transform:scaleX(1.1628);transform-origin:0 0;color:#2e2e2e;">0x00,</span>
<span class="tx serif" style="left:559.5px;top:952.26px;font-size:17.2px;transform:scaleX(1.1628);transform-origin:0 0;color:#2e2e2e;">0x00,</span>
<span class="tx serif" style="left:612.02px;top:952.26px;font-size:17.2px;transform:scaleX(1.1628);transform-origin:0 0;color:#2e2e2e;">0x00</span>
<span class="tx serif" style="left:654.5px;top:952.26px;font-size:17.2px;transform:scaleX(1.163);transform-origin:0 0;color:#2e2e2e;letter-spacing:2.250px;">},/*"</span>
<span class="tx serif" style="left:701px;top:952.3px;width:20px;text-align:center;font-size:17.2px;color:#2e2e2e;">*</span>
<span class="tx serif" style="left:718.3px;top:952.26px;font-size:17.2px;transform:scaleX(1.163);transform-origin:0 0;color:#2e2e2e;letter-spacing:2.250px;">",10*/</span>
<div style="left:1253px;top:698.5px;width:37px;height:290px;background:linear-gradient(90deg,#e9e9e9 0,#f3f3f3 30%,#f3f3f3 100%);"></div>
<div style="left:20.5px;top:988.5px;width:1232.500px;height:37px;background:linear-gradient(180deg,#e6e6e6 0,#eeeeee 30%,#f0f0f0 100%);"></div>
<div style="left:1253px;top:988.5px;width:37px;height:37px;background:#f1f1f1;"></div>
<svg class="i" style="left:1253px;top:698px" width="37" height="291" viewBox="0 0 37 291">
<defs><linearGradient id="ar" x1="0" y1="0" x2="0" y2="1"><stop offset="0" stop-color="#3c3c3c"/><stop offset="1" stop-color="#a0a0a0"/></linearGradient>
<linearGradient id="th" x1="0" y1="0" x2="1" y2="0"><stop offset="0" stop-color="#f6f6f6"/><stop offset=".5" stop-color="#e6e6e6"/><stop offset="1" stop-color="#d6d6d6"/></linearGradient></defs>
<path d="M10.500 23.500h15l-7.500 -8.500z" fill="url(#ar)"/>
<path d="M10.500 264.500h15l-7.500 8.500z" fill="url(#ar)"/>
<rect x="1.500" y="58.500" width="33" height="33" rx="2.500" fill="url(#th)" stroke="#979797" stroke-width="1.300"/>
<rect x="2.800" y="59.800" width="30.400" height="30.400" rx="1.800" fill="none" stroke="#fff" stroke-width="1" opacity=".8"/>
<g stroke="#6e6e6e" stroke-width="1.700"><path d="M10.500 69h15M10.500 75h15M10.500 81h15"/></g>
<g stroke="#fff" stroke-width="1" opacity=".9"><path d="M10.500 70.500h15M10.500 76.500h15M10.500 82.500h15"/></g>
</svg>
<svg class="i" style="left:20px;top:988px" width="1234" height="38" viewBox="0 0 1234 38">
<defs><linearGradient id="al" x1="0" y1="0" x2="1" y2="0"><stop offset="0" stop-color="#8a8a8a"/><stop offset="1" stop-color="#c4c4c4"/></linearGradient></defs>
<path d="M22.500 10v16l-9.500 -8z" fill="url(#al)"/><path d="M1209.500 10v16l9.500 -8z" fill="url(#al)"/>
</svg>
<svg class="i" style="left:0;top:0;pointer-events:none" width="1309" height="1042" viewBox="0 0 1309 1042" fill="none" stroke="#e0202c">
<rect x="278.600" y="167.800" width="335.100" height="110.200" stroke-width="4.600"/>
<rect x="777.600" y="101.400" width="440.700" height="163.800" stroke-width="5"/>
<path d="M409 287.500L398.600 355.500L404.600 357.500V428.500H412.600V357.500L418.600 355.500Z" stroke-width="4.300" stroke-linejoin="miter"/>
<path d="M981.600 277.500L971.300 352.800L977.200 354.800V430.300H986.600V354.800L991.900 352.800Z" stroke-width="4.300" stroke-linejoin="miter"/>
</svg>
<svg class="t" role="img" aria-label="设置为" style="left:347.5px;top:437.5px;" width="56.0" height="22.0" viewBox="0 0 56.0 22.0" fill="#e0202c"><text x="0" y="16.1" font-size="18.3" font-weight="bold" letter-spacing="-0.3">设置为</text></svg>
<span class="tx" style="left:402.5px;top:439px;font-size:19px;font-weight:bold;color:#e0202c;">12x12</span>
<svg class="t" role="img" aria-label="都设置为" style="left:936.5px;top:437.5px;" width="74.0" height="22.0" viewBox="0 0 74.0 22.0" fill="#e0202c"><text x="0" y="16.1" font-size="18.3" font-weight="bold" letter-spacing="-0.3">都设置为</text></svg>
<span class="tx" style="left:1008.5px;top:439px;font-size:19px;font-weight:bold;color:#e0202c;">0</span>
</body></html>
